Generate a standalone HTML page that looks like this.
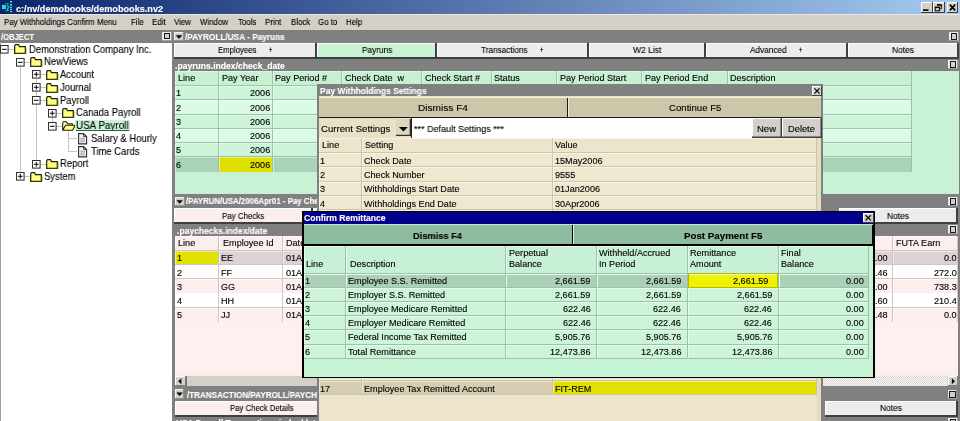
<!DOCTYPE html><html><head><meta charset="utf-8"><style>
*{margin:0;padding:0;box-sizing:border-box}
html,body{width:960px;height:421px;overflow:hidden;background:#fff;font-family:"Liberation Sans",sans-serif}
.a{position:absolute}
.t{white-space:nowrap;will-change:transform;-webkit-text-stroke:0.12px currentColor}
</style></head><body><div class="a" style="left:0px;top:0px;width:960px;height:13.5px;background:linear-gradient(to right,#0a246a 0%,#a6caf0 100%);"></div>
<svg class="a" style="left:0px;top:0px" width="14" height="14"><rect x="2" y="4.8" width="4" height="4.3" fill="#18e0d8"/><path d="M10 1h2v1.5h-2zM10 4h2v1.5h-2zM10 6.5h2v1.3h-2zM10 8.7h2v1.3h-2zM10 11h2v1.2h-2z" fill="#50e8e0"/><path d="M5.5 3.3h3v1h-3zM7 5h1.5v1.5h-1.5zM7.5 6.5h2v1.2h-2zM7 8h1.5v2h-1.5zM5.5 10.2h3v1h-3z" fill="#30c8b8"/></svg>
<div class="a t" style="left:15.50px;top:5.00px;font-size:9.15px;line-height:9.15px;color:#fff;font-weight:bold;">c:/nv/demobooks/demobooks.nv2</div>
<div class="a" style="left:921px;top:1.5px;width:11.5px;height:11px;background:#d4d0c8;box-shadow:inset -1px -1px #404040, inset 1px 1px #fff;"></div>
<div class="a" style="left:933px;top:1.5px;width:11.5px;height:11px;background:#d4d0c8;box-shadow:inset -1px -1px #404040, inset 1px 1px #fff;"></div>
<div class="a" style="left:946.5px;top:1.5px;width:11.5px;height:11px;background:#d4d0c8;box-shadow:inset -1px -1px #404040, inset 1px 1px #fff;"></div>
<svg class="a" style="left:921px;top:1.5px" width="12" height="11"><rect x="2" y="7.3" width="5.5" height="1.6" fill="#000"/></svg>
<svg class="a" style="left:933px;top:1.5px" width="12" height="11"><path d="M4 2.9h4.3v3.8h-1" fill="none" stroke="#000" stroke-width="1"/><rect x="4" y="2.4" width="4.8" height="1.2" fill="#000"/><rect x="2.2" y="5.2" width="4.4" height="3.6" fill="none" stroke="#000" stroke-width="1"/><rect x="2.2" y="4.8" width="4.4" height="1.3" fill="#000"/></svg>
<svg class="a" style="left:946.5px;top:1.5px" width="12" height="11"><path d="M2.8 2.6L8.2 8.4M8.2 2.6L2.8 8.4" stroke="#000" stroke-width="1.6"/></svg>
<div class="a" style="left:0px;top:13.5px;width:960px;height:1px;background:#ece9e2;"></div>
<div class="a" style="left:0px;top:14.5px;width:960px;height:15.5px;background:#d4d0c8;"></div>
<div class="a t" style="left:3.80px;top:18.00px;font-size:9.2px;line-height:9.2px;color:#000;transform:scaleX(0.8587);transform-origin:0 0;">Pay Withholdings Confirm Menu</div>
<div class="a t" style="left:130.80px;top:18.00px;font-size:9.2px;line-height:9.2px;color:#000;transform:scaleX(0.8587);transform-origin:0 0;">File</div>
<div class="a t" style="left:151.60px;top:18.00px;font-size:9.2px;line-height:9.2px;color:#000;transform:scaleX(0.8587);transform-origin:0 0;">Edit</div>
<div class="a t" style="left:174.00px;top:18.00px;font-size:9.2px;line-height:9.2px;color:#000;transform:scaleX(0.8587);transform-origin:0 0;">View</div>
<div class="a t" style="left:200.00px;top:18.00px;font-size:9.2px;line-height:9.2px;color:#000;transform:scaleX(0.8587);transform-origin:0 0;">Window</div>
<div class="a t" style="left:237.50px;top:18.00px;font-size:9.2px;line-height:9.2px;color:#000;transform:scaleX(0.8587);transform-origin:0 0;">Tools</div>
<div class="a t" style="left:264.50px;top:18.00px;font-size:9.2px;line-height:9.2px;color:#000;transform:scaleX(0.8587);transform-origin:0 0;">Print</div>
<div class="a t" style="left:290.50px;top:18.00px;font-size:9.2px;line-height:9.2px;color:#000;transform:scaleX(0.8587);transform-origin:0 0;">Block</div>
<div class="a t" style="left:317.50px;top:18.00px;font-size:9.2px;line-height:9.2px;color:#000;transform:scaleX(0.8587);transform-origin:0 0;">Go to</div>
<div class="a t" style="left:345.50px;top:18.00px;font-size:9.2px;line-height:9.2px;color:#000;transform:scaleX(0.8587);transform-origin:0 0;">Help</div>
<div class="a" style="left:0px;top:30px;width:172px;height:12.6px;background:#808080;"></div>
<div class="a t" style="left:1.00px;top:33.00px;font-size:8.3px;line-height:8.3px;color:#fff;font-weight:bold;transform:scaleX(0.9174);transform-origin:0 0;">/OBJECT</div>
<div class="a" style="left:162px;top:31.6px;width:10px;height:9.3px;background:#ececec;box-shadow:inset -1px -1px #a0a0a0;"></div>
<div class="a" style="left:163.5px;top:33.1px;width:6.8px;height:6.300000000000001px;border:1.2px solid #181818;border-top-width:1.6px;background:#d0d0d0;"></div>
<div class="a" style="left:0px;top:42.6px;width:172px;height:379px;background:#fff;"></div>
<div class="a" style="left:172px;top:30px;width:3px;height:391px;background:#808080;"></div>
<div class="a" style="left:172.9px;top:42px;width:1px;height:379px;background:#505050;"></div>
<div class="a" style="left:0px;top:42px;width:1px;height:379px;background:#a0a0a0;"></div>
<div class="a" style="left:20px;top:65.75px;width:1px;height:110.75px;background:#c4c4c4"></div>
<div class="a" style="left:36px;top:78.5px;width:1px;height:85.25px;background:#c4c4c4"></div>
<div class="a" style="left:52px;top:116.75px;width:1px;height:4.75px;background:#c4c4c4"></div>
<div class="a" style="left:68px;top:130.5px;width:1px;height:21.0px;background:#c4c4c4"></div>
<div class="a" style="left:8.5px;top:49px;width:6.0px;height:1px;background:#c4c4c4"></div>
<svg class="a" style="left:0px;top:45px" width="9" height="9"><rect x="0.5" y="0.5" width="7.6" height="7.6" fill="#fff" stroke="#303030" stroke-width="1.05"/><path d="M2 4.3H6.6" stroke="#000" stroke-width="1"/></svg>
<svg class="a" style="left:14px;top:44px" width="13" height="10"><path d="M0.7 1.7 L0.7 9.3 L11.3 9.3 L11.3 2.7 L5.5 2.7 L4.5 0.7 L1.5 0.7 Z" fill="#ffff80" stroke="#202000" stroke-width="1.2"/><path d="M11.9 3.5 V9.9 H1.5" stroke="#606000" stroke-width="0.8" fill="none"/></svg>
<div class="a t" style="left:28.50px;top:45.00px;font-size:10.3px;line-height:10.3px;color:#000;transform:scaleX(0.9182);transform-origin:0 0;">Demonstration Company Inc.</div>
<div class="a" style="left:24.3px;top:62px;width:6.0px;height:1px;background:#c4c4c4"></div>
<svg class="a" style="left:16px;top:58px" width="9" height="9"><rect x="0.5" y="0.5" width="7.6" height="7.6" fill="#fff" stroke="#303030" stroke-width="1.05"/><path d="M2 4.3H6.6" stroke="#000" stroke-width="1"/></svg>
<svg class="a" style="left:30px;top:57px" width="13" height="10"><path d="M0.7 1.7 L0.7 9.3 L11.3 9.3 L11.3 2.7 L5.5 2.7 L4.5 0.7 L1.5 0.7 Z" fill="#ffff80" stroke="#202000" stroke-width="1.2"/><path d="M11.9 3.5 V9.9 H1.5" stroke="#606000" stroke-width="0.8" fill="none"/></svg>
<div class="a t" style="left:44.30px;top:57.00px;font-size:10.3px;line-height:10.3px;color:#000;transform:scaleX(0.9182);transform-origin:0 0;">NewViews</div>
<div class="a" style="left:40.1px;top:74px;width:6.0px;height:1px;background:#c4c4c4"></div>
<svg class="a" style="left:32px;top:70px" width="9" height="9"><rect x="0.5" y="0.5" width="7.6" height="7.6" fill="#fff" stroke="#303030" stroke-width="1.05"/><path d="M2 4.3H6.6 M4.3 2V6.6" stroke="#000" stroke-width="1"/></svg>
<svg class="a" style="left:46px;top:70px" width="13" height="10"><path d="M0.7 1.7 L0.7 9.3 L11.3 9.3 L11.3 2.7 L5.5 2.7 L4.5 0.7 L1.5 0.7 Z" fill="#ffff80" stroke="#202000" stroke-width="1.2"/><path d="M11.9 3.5 V9.9 H1.5" stroke="#606000" stroke-width="0.8" fill="none"/></svg>
<div class="a t" style="left:60.10px;top:70.00px;font-size:10.3px;line-height:10.3px;color:#000;transform:scaleX(0.9182);transform-origin:0 0;">Account</div>
<div class="a" style="left:40.1px;top:87px;width:6.0px;height:1px;background:#c4c4c4"></div>
<svg class="a" style="left:32px;top:83px" width="9" height="9"><rect x="0.5" y="0.5" width="7.6" height="7.6" fill="#fff" stroke="#303030" stroke-width="1.05"/><path d="M2 4.3H6.6 M4.3 2V6.6" stroke="#000" stroke-width="1"/></svg>
<svg class="a" style="left:46px;top:83px" width="13" height="10"><path d="M0.7 1.7 L0.7 9.3 L11.3 9.3 L11.3 2.7 L5.5 2.7 L4.5 0.7 L1.5 0.7 Z" fill="#ffff80" stroke="#202000" stroke-width="1.2"/><path d="M11.9 3.5 V9.9 H1.5" stroke="#606000" stroke-width="0.8" fill="none"/></svg>
<div class="a t" style="left:60.10px;top:83.00px;font-size:10.3px;line-height:10.3px;color:#000;transform:scaleX(0.9182);transform-origin:0 0;">Journal</div>
<div class="a" style="left:40.1px;top:100px;width:6.0px;height:1px;background:#c4c4c4"></div>
<svg class="a" style="left:32px;top:96px" width="9" height="9"><rect x="0.5" y="0.5" width="7.6" height="7.6" fill="#fff" stroke="#303030" stroke-width="1.05"/><path d="M2 4.3H6.6" stroke="#000" stroke-width="1"/></svg>
<svg class="a" style="left:46px;top:96px" width="13" height="10"><path d="M0.7 1.7 L0.7 9.3 L11.3 9.3 L11.3 2.7 L5.5 2.7 L4.5 0.7 L1.5 0.7 Z" fill="#ffff80" stroke="#202000" stroke-width="1.2"/><path d="M11.9 3.5 V9.9 H1.5" stroke="#606000" stroke-width="0.8" fill="none"/></svg>
<div class="a t" style="left:60.10px;top:96.00px;font-size:10.3px;line-height:10.3px;color:#000;transform:scaleX(0.9182);transform-origin:0 0;">Payroll</div>
<div class="a" style="left:55.900000000000006px;top:113px;width:6.0px;height:1px;background:#c4c4c4"></div>
<svg class="a" style="left:48px;top:109px" width="9" height="9"><rect x="0.5" y="0.5" width="7.6" height="7.6" fill="#fff" stroke="#303030" stroke-width="1.05"/><path d="M2 4.3H6.6 M4.3 2V6.6" stroke="#000" stroke-width="1"/></svg>
<svg class="a" style="left:62px;top:108px" width="13" height="10"><path d="M0.7 1.7 L0.7 9.3 L11.3 9.3 L11.3 2.7 L5.5 2.7 L4.5 0.7 L1.5 0.7 Z" fill="#ffff80" stroke="#202000" stroke-width="1.2"/><path d="M11.9 3.5 V9.9 H1.5" stroke="#606000" stroke-width="0.8" fill="none"/></svg>
<div class="a t" style="left:75.90px;top:108.00px;font-size:10.3px;line-height:10.3px;color:#000;transform:scaleX(0.9182);transform-origin:0 0;">Canada Payroll</div>
<div class="a" style="left:55.900000000000006px;top:126px;width:6.0px;height:1px;background:#c4c4c4"></div>
<svg class="a" style="left:48px;top:122px" width="9" height="9"><rect x="0.5" y="0.5" width="7.6" height="7.6" fill="#fff" stroke="#303030" stroke-width="1.05"/><path d="M2 4.3H6.6" stroke="#000" stroke-width="1"/></svg>
<svg class="a" style="left:62px;top:121px" width="14" height="10"><path d="M0.7 1.7 L0.7 9.3 L10.5 9.3 L13.3 4.3 L3.5 4.3 L0.7 9.3 M0.7 1.7 L1.5 0.7 L4.5 0.7 L5.5 2.7 L10.3 2.7 L10.3 4.3" fill="#ffff80" stroke="#202000" stroke-width="1.1"/></svg>
<div class="a" style="left:75.4px;top:119.7px;width:54.5px;height:11px;background:#c8f4d4;"></div>
<div class="a t" style="left:75.90px;top:121.00px;font-size:10.3px;line-height:10.3px;color:#000;transform:scaleX(0.9553);transform-origin:0 0;">USA Payroll</div>
<div class="a" style="left:75.9px;top:129.8px;width:52.8px;height:1px;background:#3a5a48;"></div>
<div class="a" style="left:68px;top:138px;width:9px;height:1px;background:#c4c4c4"></div>
<svg class="a" style="left:78.3px;top:133px" width="10" height="12"><path d="M0.6 0.6 H5.6 L8.6 3.6 V10.9 H0.6 Z" fill="#f4f4f4" stroke="#303030" stroke-width="1.1"/><path d="M5.6 0.6 V3.6 H8.6" fill="none" stroke="#303030" stroke-width="0.9"/><path d="M2.2 5.3H7M2.2 7H7M2.2 8.7H7" stroke="#909090" stroke-width="0.8"/></svg>
<div class="a t" style="left:91.30px;top:134.00px;font-size:10.3px;line-height:10.3px;color:#000;transform:scaleX(0.9182);transform-origin:0 0;">Salary &amp; Hourly</div>
<div class="a" style="left:68px;top:151px;width:9px;height:1px;background:#c4c4c4"></div>
<svg class="a" style="left:78.3px;top:146px" width="10" height="12"><path d="M0.6 0.6 H5.6 L8.6 3.6 V10.9 H0.6 Z" fill="#f4f4f4" stroke="#303030" stroke-width="1.1"/><path d="M5.6 0.6 V3.6 H8.6" fill="none" stroke="#303030" stroke-width="0.9"/><path d="M2.2 5.3H7M2.2 7H7M2.2 8.7H7" stroke="#909090" stroke-width="0.8"/></svg>
<div class="a t" style="left:91.30px;top:147.00px;font-size:10.3px;line-height:10.3px;color:#000;transform:scaleX(0.9182);transform-origin:0 0;">Time Cards</div>
<div class="a" style="left:40.1px;top:164px;width:6.0px;height:1px;background:#c4c4c4"></div>
<svg class="a" style="left:32px;top:160px" width="9" height="9"><rect x="0.5" y="0.5" width="7.6" height="7.6" fill="#fff" stroke="#303030" stroke-width="1.05"/><path d="M2 4.3H6.6 M4.3 2V6.6" stroke="#000" stroke-width="1"/></svg>
<svg class="a" style="left:46px;top:159px" width="13" height="10"><path d="M0.7 1.7 L0.7 9.3 L11.3 9.3 L11.3 2.7 L5.5 2.7 L4.5 0.7 L1.5 0.7 Z" fill="#ffff80" stroke="#202000" stroke-width="1.2"/><path d="M11.9 3.5 V9.9 H1.5" stroke="#606000" stroke-width="0.8" fill="none"/></svg>
<div class="a t" style="left:60.10px;top:159.00px;font-size:10.3px;line-height:10.3px;color:#000;transform:scaleX(0.9182);transform-origin:0 0;">Report</div>
<div class="a" style="left:24.3px;top:176px;width:6.0px;height:1px;background:#c4c4c4"></div>
<svg class="a" style="left:16px;top:172px" width="9" height="9"><rect x="0.5" y="0.5" width="7.6" height="7.6" fill="#fff" stroke="#303030" stroke-width="1.05"/><path d="M2 4.3H6.6 M4.3 2V6.6" stroke="#000" stroke-width="1"/></svg>
<svg class="a" style="left:30px;top:172px" width="13" height="10"><path d="M0.7 1.7 L0.7 9.3 L11.3 9.3 L11.3 2.7 L5.5 2.7 L4.5 0.7 L1.5 0.7 Z" fill="#ffff80" stroke="#202000" stroke-width="1.2"/><path d="M11.9 3.5 V9.9 H1.5" stroke="#606000" stroke-width="0.8" fill="none"/></svg>
<div class="a t" style="left:44.30px;top:172.00px;font-size:10.3px;line-height:10.3px;color:#000;transform:scaleX(0.9182);transform-origin:0 0;">System</div>
<div class="a" style="left:172px;top:30px;width:788px;height:391px;background:#808080;"></div>
<div class="a" style="left:174px;top:31.5px;width:10px;height:9.5px;background:#d4d0c8;box-shadow:inset -1px -1px #909090, inset 1px 1px #f4f4f4;"></div>
<svg class="a" style="left:174px;top:31.5px" width="10" height="9.5"><path d="M2.3 3.55 L7.7 3.55 L5.0 6.55 Z" fill="#000" stroke="#000" stroke-width="0.5"/></svg>
<div class="a t" style="left:185.30px;top:33.00px;font-size:8.3px;line-height:8.3px;color:#fff;font-weight:bold;transform:scaleX(0.9946);transform-origin:0 0;">/PAYROLL/USA - Payruns</div>
<div class="a" style="left:949px;top:31.8px;width:9.5px;height:9.5px;background:#ececec;box-shadow:inset -1px -1px #a0a0a0;"></div>
<div class="a" style="left:950.5px;top:33.3px;width:6.3px;height:6.5px;border:1.2px solid #181818;border-top-width:1.6px;background:#d0d0d0;"></div>
<div class="a" style="left:174px;top:42.6px;width:143px;height:16.4px;background:#ececec;box-shadow:inset -2px -2px #404040, inset 1px 1px #fff;"></div>
<div class="a t" style="left:217.80px;top:46.00px;font-size:9px;line-height:9px;color:#000;transform:scaleX(0.8625);transform-origin:0 0;">Employees</div>
<div class="a t" style="left:268.70px;top:46.00px;font-size:9px;line-height:9px;color:#000;transform:scaleX(0.6469);transform-origin:0 0;">+</div>
<div class="a" style="left:317px;top:42.6px;width:120px;height:16.4px;background:#c8f4d4;box-shadow:inset -2px -2px #404040, inset 1px 1px #fff;"></div>
<div class="a t" style="left:361.85px;top:46.00px;font-size:9px;line-height:9px;color:#000;transform:scaleX(0.9177);transform-origin:0 0;">Payruns</div>
<div class="a" style="left:437px;top:42.6px;width:152px;height:16.4px;background:#ececec;box-shadow:inset -2px -2px #404040, inset 1px 1px #fff;"></div>
<div class="a t" style="left:481.25px;top:46.00px;font-size:9px;line-height:9px;color:#000;transform:scaleX(0.9084);transform-origin:0 0;">Transactions</div>
<div class="a t" style="left:540.25px;top:46.00px;font-size:9px;line-height:9px;color:#000;transform:scaleX(0.6469);transform-origin:0 0;">+</div>
<div class="a" style="left:589px;top:42.6px;width:117px;height:16.4px;background:#ececec;box-shadow:inset -2px -2px #404040, inset 1px 1px #fff;"></div>
<div class="a t" style="left:633.30px;top:46.00px;font-size:9px;line-height:9px;color:#000;transform:scaleX(0.9465);transform-origin:0 0;">W2 List</div>
<div class="a" style="left:706px;top:42.6px;width:142px;height:16.4px;background:#ececec;box-shadow:inset -2px -2px #404040, inset 1px 1px #fff;"></div>
<div class="a t" style="left:750.20px;top:46.00px;font-size:9px;line-height:9px;color:#000;transform:scaleX(0.9143);transform-origin:0 0;">Advanced</div>
<div class="a t" style="left:799.30px;top:46.00px;font-size:9px;line-height:9px;color:#000;transform:scaleX(0.6469);transform-origin:0 0;">+</div>
<div class="a" style="left:848px;top:42.6px;width:110.5px;height:16.4px;background:#ececec;box-shadow:inset -2px -2px #404040, inset 1px 1px #fff;"></div>
<div class="a t" style="left:892.25px;top:46.00px;font-size:9px;line-height:9px;color:#000;transform:scaleX(0.9357);transform-origin:0 0;">Notes</div>
<div class="a t" style="left:175.30px;top:62.00px;font-size:8.6px;line-height:8.6px;color:#fff;font-weight:bold;">.payruns.index/check_date</div>
<div class="a" style="left:948px;top:59.6px;width:9.7px;height:9.5px;background:#ececec;box-shadow:inset -1px -1px #a0a0a0;"></div>
<div class="a" style="left:949.5px;top:61.1px;width:6.499999999999999px;height:6.5px;border:1.2px solid #181818;border-top-width:1.6px;background:#d0d0d0;"></div>
<div class="a" style="left:174.5px;top:71px;width:784px;height:122.6px;background:#c8f2d4;"></div>
<div class="a" style="left:175px;top:71px;width:44px;height:15px;background:#c6f0d2;border-right:1.4px solid #9cc4aa;border-bottom:1.2px solid #9cc4aa;box-shadow:inset 1px 1px rgba(255,255,255,0.45);"></div>
<div class="a" style="left:219px;top:71px;width:53.5px;height:15px;background:#c6f0d2;border-right:1.4px solid #9cc4aa;border-bottom:1.2px solid #9cc4aa;box-shadow:inset 1px 1px rgba(255,255,255,0.45);"></div>
<div class="a" style="left:272.5px;top:71px;width:69.5px;height:15px;background:#c6f0d2;border-right:1.4px solid #9cc4aa;border-bottom:1.2px solid #9cc4aa;box-shadow:inset 1px 1px rgba(255,255,255,0.45);"></div>
<div class="a" style="left:342px;top:71px;width:80px;height:15px;background:#c6f0d2;border-right:1.4px solid #9cc4aa;border-bottom:1.2px solid #9cc4aa;box-shadow:inset 1px 1px rgba(255,255,255,0.45);"></div>
<div class="a" style="left:422px;top:71px;width:69.5px;height:15px;background:#c6f0d2;border-right:1.4px solid #9cc4aa;border-bottom:1.2px solid #9cc4aa;box-shadow:inset 1px 1px rgba(255,255,255,0.45);"></div>
<div class="a" style="left:491.5px;top:71px;width:65.5px;height:15px;background:#c6f0d2;border-right:1.4px solid #9cc4aa;border-bottom:1.2px solid #9cc4aa;box-shadow:inset 1px 1px rgba(255,255,255,0.45);"></div>
<div class="a" style="left:557px;top:71px;width:85px;height:15px;background:#c6f0d2;border-right:1.4px solid #9cc4aa;border-bottom:1.2px solid #9cc4aa;box-shadow:inset 1px 1px rgba(255,255,255,0.45);"></div>
<div class="a" style="left:642px;top:71px;width:85.5px;height:15px;background:#c6f0d2;border-right:1.4px solid #9cc4aa;border-bottom:1.2px solid #9cc4aa;box-shadow:inset 1px 1px rgba(255,255,255,0.45);"></div>
<div class="a" style="left:727.5px;top:71px;width:184.5px;height:15px;background:#c6f0d2;border-right:1.4px solid #9cc4aa;border-bottom:1.2px solid #9cc4aa;box-shadow:inset 1px 1px rgba(255,255,255,0.45);"></div>
<div class="a t" style="left:177.70px;top:74.00px;font-size:9.1px;line-height:9.1px;color:#000;">Line</div>
<div class="a t" style="left:221.70px;top:74.00px;font-size:9.1px;line-height:9.1px;color:#000;">Pay Year</div>
<div class="a t" style="left:275.20px;top:74.00px;font-size:9.1px;line-height:9.1px;color:#000;">Pay Period #</div>
<div class="a t" style="left:344.70px;top:74.00px;font-size:9.1px;line-height:9.1px;color:#000;">Check Date&nbsp;&nbsp;w</div>
<div class="a t" style="left:424.70px;top:74.00px;font-size:9.1px;line-height:9.1px;color:#000;">Check Start #</div>
<div class="a t" style="left:494.20px;top:74.00px;font-size:9.1px;line-height:9.1px;color:#000;">Status</div>
<div class="a t" style="left:559.70px;top:74.00px;font-size:9.1px;line-height:9.1px;color:#000;">Pay Period Start</div>
<div class="a t" style="left:644.70px;top:74.00px;font-size:9.1px;line-height:9.1px;color:#000;">Pay Period End</div>
<div class="a t" style="left:730.20px;top:74.00px;font-size:9.1px;line-height:9.1px;color:#000;">Description</div>
<div class="a" style="left:175px;top:86.0px;width:44px;height:14.25px;background:#cdf3d9;border-right:1.4px solid #9cc4aa;border-bottom:1.2px solid #9cc4aa;box-shadow:inset 1px 1px rgba(255,255,255,0.45);"></div>
<div class="a" style="left:219px;top:86.0px;width:53.5px;height:14.25px;background:#cdf3d9;border-right:1.4px solid #9cc4aa;border-bottom:1.2px solid #9cc4aa;box-shadow:inset 1px 1px rgba(255,255,255,0.45);"></div>
<div class="a" style="left:272.5px;top:86.0px;width:69.5px;height:14.25px;background:#cdf3d9;border-right:1.4px solid #9cc4aa;border-bottom:1.2px solid #9cc4aa;box-shadow:inset 1px 1px rgba(255,255,255,0.45);"></div>
<div class="a" style="left:342px;top:86.0px;width:80px;height:14.25px;background:#cdf3d9;border-right:1.4px solid #9cc4aa;border-bottom:1.2px solid #9cc4aa;box-shadow:inset 1px 1px rgba(255,255,255,0.45);"></div>
<div class="a" style="left:422px;top:86.0px;width:69.5px;height:14.25px;background:#cdf3d9;border-right:1.4px solid #9cc4aa;border-bottom:1.2px solid #9cc4aa;box-shadow:inset 1px 1px rgba(255,255,255,0.45);"></div>
<div class="a" style="left:491.5px;top:86.0px;width:65.5px;height:14.25px;background:#cdf3d9;border-right:1.4px solid #9cc4aa;border-bottom:1.2px solid #9cc4aa;box-shadow:inset 1px 1px rgba(255,255,255,0.45);"></div>
<div class="a" style="left:557px;top:86.0px;width:85px;height:14.25px;background:#cdf3d9;border-right:1.4px solid #9cc4aa;border-bottom:1.2px solid #9cc4aa;box-shadow:inset 1px 1px rgba(255,255,255,0.45);"></div>
<div class="a" style="left:642px;top:86.0px;width:85.5px;height:14.25px;background:#cdf3d9;border-right:1.4px solid #9cc4aa;border-bottom:1.2px solid #9cc4aa;box-shadow:inset 1px 1px rgba(255,255,255,0.45);"></div>
<div class="a" style="left:727.5px;top:86.0px;width:184.5px;height:14.25px;background:#cdf3d9;border-right:1.4px solid #9cc4aa;border-bottom:1.2px solid #9cc4aa;box-shadow:inset 1px 1px rgba(255,255,255,0.45);"></div>
<div class="a t" style="left:176.00px;top:89.00px;font-size:9.1px;line-height:9.1px;color:#000;">1</div>
<div class="a t" style="left:250.26px;top:89.00px;font-size:9.1px;line-height:9.1px;color:#000;">2006</div>
<div class="a" style="left:175px;top:100.25px;width:44px;height:14.25px;background:#dcfbe6;border-right:1.4px solid #9cc4aa;border-bottom:1.2px solid #9cc4aa;box-shadow:inset 1px 1px rgba(255,255,255,0.45);"></div>
<div class="a" style="left:219px;top:100.25px;width:53.5px;height:14.25px;background:#dcfbe6;border-right:1.4px solid #9cc4aa;border-bottom:1.2px solid #9cc4aa;box-shadow:inset 1px 1px rgba(255,255,255,0.45);"></div>
<div class="a" style="left:272.5px;top:100.25px;width:69.5px;height:14.25px;background:#dcfbe6;border-right:1.4px solid #9cc4aa;border-bottom:1.2px solid #9cc4aa;box-shadow:inset 1px 1px rgba(255,255,255,0.45);"></div>
<div class="a" style="left:342px;top:100.25px;width:80px;height:14.25px;background:#dcfbe6;border-right:1.4px solid #9cc4aa;border-bottom:1.2px solid #9cc4aa;box-shadow:inset 1px 1px rgba(255,255,255,0.45);"></div>
<div class="a" style="left:422px;top:100.25px;width:69.5px;height:14.25px;background:#dcfbe6;border-right:1.4px solid #9cc4aa;border-bottom:1.2px solid #9cc4aa;box-shadow:inset 1px 1px rgba(255,255,255,0.45);"></div>
<div class="a" style="left:491.5px;top:100.25px;width:65.5px;height:14.25px;background:#dcfbe6;border-right:1.4px solid #9cc4aa;border-bottom:1.2px solid #9cc4aa;box-shadow:inset 1px 1px rgba(255,255,255,0.45);"></div>
<div class="a" style="left:557px;top:100.25px;width:85px;height:14.25px;background:#dcfbe6;border-right:1.4px solid #9cc4aa;border-bottom:1.2px solid #9cc4aa;box-shadow:inset 1px 1px rgba(255,255,255,0.45);"></div>
<div class="a" style="left:642px;top:100.25px;width:85.5px;height:14.25px;background:#dcfbe6;border-right:1.4px solid #9cc4aa;border-bottom:1.2px solid #9cc4aa;box-shadow:inset 1px 1px rgba(255,255,255,0.45);"></div>
<div class="a" style="left:727.5px;top:100.25px;width:184.5px;height:14.25px;background:#dcfbe6;border-right:1.4px solid #9cc4aa;border-bottom:1.2px solid #9cc4aa;box-shadow:inset 1px 1px rgba(255,255,255,0.45);"></div>
<div class="a t" style="left:176.00px;top:104.00px;font-size:9.1px;line-height:9.1px;color:#000;">2</div>
<div class="a t" style="left:250.26px;top:104.00px;font-size:9.1px;line-height:9.1px;color:#000;">2006</div>
<div class="a" style="left:175px;top:114.5px;width:44px;height:14.25px;background:#cdf3d9;border-right:1.4px solid #9cc4aa;border-bottom:1.2px solid #9cc4aa;box-shadow:inset 1px 1px rgba(255,255,255,0.45);"></div>
<div class="a" style="left:219px;top:114.5px;width:53.5px;height:14.25px;background:#cdf3d9;border-right:1.4px solid #9cc4aa;border-bottom:1.2px solid #9cc4aa;box-shadow:inset 1px 1px rgba(255,255,255,0.45);"></div>
<div class="a" style="left:272.5px;top:114.5px;width:69.5px;height:14.25px;background:#cdf3d9;border-right:1.4px solid #9cc4aa;border-bottom:1.2px solid #9cc4aa;box-shadow:inset 1px 1px rgba(255,255,255,0.45);"></div>
<div class="a" style="left:342px;top:114.5px;width:80px;height:14.25px;background:#cdf3d9;border-right:1.4px solid #9cc4aa;border-bottom:1.2px solid #9cc4aa;box-shadow:inset 1px 1px rgba(255,255,255,0.45);"></div>
<div class="a" style="left:422px;top:114.5px;width:69.5px;height:14.25px;background:#cdf3d9;border-right:1.4px solid #9cc4aa;border-bottom:1.2px solid #9cc4aa;box-shadow:inset 1px 1px rgba(255,255,255,0.45);"></div>
<div class="a" style="left:491.5px;top:114.5px;width:65.5px;height:14.25px;background:#cdf3d9;border-right:1.4px solid #9cc4aa;border-bottom:1.2px solid #9cc4aa;box-shadow:inset 1px 1px rgba(255,255,255,0.45);"></div>
<div class="a" style="left:557px;top:114.5px;width:85px;height:14.25px;background:#cdf3d9;border-right:1.4px solid #9cc4aa;border-bottom:1.2px solid #9cc4aa;box-shadow:inset 1px 1px rgba(255,255,255,0.45);"></div>
<div class="a" style="left:642px;top:114.5px;width:85.5px;height:14.25px;background:#cdf3d9;border-right:1.4px solid #9cc4aa;border-bottom:1.2px solid #9cc4aa;box-shadow:inset 1px 1px rgba(255,255,255,0.45);"></div>
<div class="a" style="left:727.5px;top:114.5px;width:184.5px;height:14.25px;background:#cdf3d9;border-right:1.4px solid #9cc4aa;border-bottom:1.2px solid #9cc4aa;box-shadow:inset 1px 1px rgba(255,255,255,0.45);"></div>
<div class="a t" style="left:176.00px;top:118.00px;font-size:9.1px;line-height:9.1px;color:#000;">3</div>
<div class="a t" style="left:250.26px;top:118.00px;font-size:9.1px;line-height:9.1px;color:#000;">2006</div>
<div class="a" style="left:175px;top:128.75px;width:44px;height:14.25px;background:#dcfbe6;border-right:1.4px solid #9cc4aa;border-bottom:1.2px solid #9cc4aa;box-shadow:inset 1px 1px rgba(255,255,255,0.45);"></div>
<div class="a" style="left:219px;top:128.75px;width:53.5px;height:14.25px;background:#dcfbe6;border-right:1.4px solid #9cc4aa;border-bottom:1.2px solid #9cc4aa;box-shadow:inset 1px 1px rgba(255,255,255,0.45);"></div>
<div class="a" style="left:272.5px;top:128.75px;width:69.5px;height:14.25px;background:#dcfbe6;border-right:1.4px solid #9cc4aa;border-bottom:1.2px solid #9cc4aa;box-shadow:inset 1px 1px rgba(255,255,255,0.45);"></div>
<div class="a" style="left:342px;top:128.75px;width:80px;height:14.25px;background:#dcfbe6;border-right:1.4px solid #9cc4aa;border-bottom:1.2px solid #9cc4aa;box-shadow:inset 1px 1px rgba(255,255,255,0.45);"></div>
<div class="a" style="left:422px;top:128.75px;width:69.5px;height:14.25px;background:#dcfbe6;border-right:1.4px solid #9cc4aa;border-bottom:1.2px solid #9cc4aa;box-shadow:inset 1px 1px rgba(255,255,255,0.45);"></div>
<div class="a" style="left:491.5px;top:128.75px;width:65.5px;height:14.25px;background:#dcfbe6;border-right:1.4px solid #9cc4aa;border-bottom:1.2px solid #9cc4aa;box-shadow:inset 1px 1px rgba(255,255,255,0.45);"></div>
<div class="a" style="left:557px;top:128.75px;width:85px;height:14.25px;background:#dcfbe6;border-right:1.4px solid #9cc4aa;border-bottom:1.2px solid #9cc4aa;box-shadow:inset 1px 1px rgba(255,255,255,0.45);"></div>
<div class="a" style="left:642px;top:128.75px;width:85.5px;height:14.25px;background:#dcfbe6;border-right:1.4px solid #9cc4aa;border-bottom:1.2px solid #9cc4aa;box-shadow:inset 1px 1px rgba(255,255,255,0.45);"></div>
<div class="a" style="left:727.5px;top:128.75px;width:184.5px;height:14.25px;background:#dcfbe6;border-right:1.4px solid #9cc4aa;border-bottom:1.2px solid #9cc4aa;box-shadow:inset 1px 1px rgba(255,255,255,0.45);"></div>
<div class="a t" style="left:176.00px;top:132.00px;font-size:9.1px;line-height:9.1px;color:#000;">4</div>
<div class="a t" style="left:250.26px;top:132.00px;font-size:9.1px;line-height:9.1px;color:#000;">2006</div>
<div class="a" style="left:175px;top:143.0px;width:44px;height:14.25px;background:#cdf3d9;border-right:1.4px solid #9cc4aa;border-bottom:1.2px solid #9cc4aa;box-shadow:inset 1px 1px rgba(255,255,255,0.45);"></div>
<div class="a" style="left:219px;top:143.0px;width:53.5px;height:14.25px;background:#cdf3d9;border-right:1.4px solid #9cc4aa;border-bottom:1.2px solid #9cc4aa;box-shadow:inset 1px 1px rgba(255,255,255,0.45);"></div>
<div class="a" style="left:272.5px;top:143.0px;width:69.5px;height:14.25px;background:#cdf3d9;border-right:1.4px solid #9cc4aa;border-bottom:1.2px solid #9cc4aa;box-shadow:inset 1px 1px rgba(255,255,255,0.45);"></div>
<div class="a" style="left:342px;top:143.0px;width:80px;height:14.25px;background:#cdf3d9;border-right:1.4px solid #9cc4aa;border-bottom:1.2px solid #9cc4aa;box-shadow:inset 1px 1px rgba(255,255,255,0.45);"></div>
<div class="a" style="left:422px;top:143.0px;width:69.5px;height:14.25px;background:#cdf3d9;border-right:1.4px solid #9cc4aa;border-bottom:1.2px solid #9cc4aa;box-shadow:inset 1px 1px rgba(255,255,255,0.45);"></div>
<div class="a" style="left:491.5px;top:143.0px;width:65.5px;height:14.25px;background:#cdf3d9;border-right:1.4px solid #9cc4aa;border-bottom:1.2px solid #9cc4aa;box-shadow:inset 1px 1px rgba(255,255,255,0.45);"></div>
<div class="a" style="left:557px;top:143.0px;width:85px;height:14.25px;background:#cdf3d9;border-right:1.4px solid #9cc4aa;border-bottom:1.2px solid #9cc4aa;box-shadow:inset 1px 1px rgba(255,255,255,0.45);"></div>
<div class="a" style="left:642px;top:143.0px;width:85.5px;height:14.25px;background:#cdf3d9;border-right:1.4px solid #9cc4aa;border-bottom:1.2px solid #9cc4aa;box-shadow:inset 1px 1px rgba(255,255,255,0.45);"></div>
<div class="a" style="left:727.5px;top:143.0px;width:184.5px;height:14.25px;background:#cdf3d9;border-right:1.4px solid #9cc4aa;border-bottom:1.2px solid #9cc4aa;box-shadow:inset 1px 1px rgba(255,255,255,0.45);"></div>
<div class="a t" style="left:176.00px;top:146.00px;font-size:9.1px;line-height:9.1px;color:#000;">5</div>
<div class="a t" style="left:250.26px;top:146.00px;font-size:9.1px;line-height:9.1px;color:#000;">2006</div>
<div class="a" style="left:175px;top:157.25px;width:44px;height:14.25px;background:#a9d3b9;border-right:1.4px solid #9cc4aa;box-shadow:inset 1px 1px rgba(255,255,255,0.45);"></div>
<div class="a" style="left:219px;top:157.25px;width:53.5px;height:14.25px;background:#e0e000;border-right:1.4px solid #9cc4aa;box-shadow:inset 1px 1px rgba(255,255,255,0.45);"></div>
<div class="a" style="left:272.5px;top:157.25px;width:69.5px;height:14.25px;background:#a9d3b9;border-right:1.4px solid #9cc4aa;box-shadow:inset 1px 1px rgba(255,255,255,0.45);"></div>
<div class="a" style="left:342px;top:157.25px;width:80px;height:14.25px;background:#a9d3b9;border-right:1.4px solid #9cc4aa;box-shadow:inset 1px 1px rgba(255,255,255,0.45);"></div>
<div class="a" style="left:422px;top:157.25px;width:69.5px;height:14.25px;background:#a9d3b9;border-right:1.4px solid #9cc4aa;box-shadow:inset 1px 1px rgba(255,255,255,0.45);"></div>
<div class="a" style="left:491.5px;top:157.25px;width:65.5px;height:14.25px;background:#a9d3b9;border-right:1.4px solid #9cc4aa;box-shadow:inset 1px 1px rgba(255,255,255,0.45);"></div>
<div class="a" style="left:557px;top:157.25px;width:85px;height:14.25px;background:#a9d3b9;border-right:1.4px solid #9cc4aa;box-shadow:inset 1px 1px rgba(255,255,255,0.45);"></div>
<div class="a" style="left:642px;top:157.25px;width:85.5px;height:14.25px;background:#a9d3b9;border-right:1.4px solid #9cc4aa;box-shadow:inset 1px 1px rgba(255,255,255,0.45);"></div>
<div class="a" style="left:727.5px;top:157.25px;width:184.5px;height:14.25px;background:#a9d3b9;border-right:1.4px solid #9cc4aa;box-shadow:inset 1px 1px rgba(255,255,255,0.45);"></div>
<div class="a t" style="left:176.00px;top:161.00px;font-size:9.1px;line-height:9.1px;color:#000;">6</div>
<div class="a t" style="left:250.26px;top:161.00px;font-size:9.1px;line-height:9.1px;color:#000;">2006</div>
<div class="a" style="left:174.5px;top:193.6px;width:784px;height:14.4px;background:#808080;"></div>
<div class="a" style="left:175.3px;top:196.8px;width:9.3px;height:9.3px;background:#d4d0c8;box-shadow:inset -1px -1px #909090, inset 1px 1px #f4f4f4;"></div>
<svg class="a" style="left:175.3px;top:196.8px" width="9.3" height="9.3"><path d="M1.9500000000000002 3.45 L7.3500000000000005 3.45 L4.65 6.45 Z" fill="#000" stroke="#000" stroke-width="0.5"/></svg>
<div class="a t" style="left:186.00px;top:197.00px;font-size:8.3px;line-height:8.3px;color:#fff;font-weight:bold;transform:scaleX(0.9460);transform-origin:0 0;">/PAYRUN/USA/2006Apr01 - Pay Checks</div>
<div class="a" style="left:948.2px;top:196.6px;width:9.7px;height:9.7px;background:#ececec;box-shadow:inset -1px -1px #a0a0a0;"></div>
<div class="a" style="left:949.7px;top:198.1px;width:6.499999999999999px;height:6.699999999999999px;border:1.2px solid #181818;border-top-width:1.6px;background:#d0d0d0;"></div>
<div class="a" style="left:174px;top:208.3px;width:138.5px;height:15.699999999999989px;background:#fdeeee;box-shadow:inset -2px -2px #404040, inset 1px 1px #fff;"></div>
<div class="a t" style="left:222.15px;top:212.00px;font-size:9px;line-height:9px;color:#000;transform:scaleX(0.8788);transform-origin:0 0;">Pay Checks</div>
<div class="a" style="left:313px;top:208.3px;width:127px;height:15.699999999999989px;background:#ececec;box-shadow:inset -2px -2px #404040, inset 1px 1px #fff;"></div>
<div class="a t" style="left:357.30px;top:212.00px;font-size:9px;line-height:9px;color:#000;transform:scaleX(0.8625);transform-origin:0 0;">Employees</div>
<div class="a" style="left:839px;top:208.3px;width:118.5px;height:15.699999999999989px;background:#ececec;box-shadow:inset -2px -2px #404040, inset 1px 1px #fff;"></div>
<div class="a t" style="left:887.25px;top:212.00px;font-size:9px;line-height:9px;color:#000;transform:scaleX(0.9357);transform-origin:0 0;">Notes</div>
<div class="a t" style="left:176.60px;top:227.00px;font-size:8.6px;line-height:8.6px;color:#fff;font-weight:bold;transform:scaleX(0.9901);transform-origin:0 0;">.paychecks.index/date</div>
<div class="a" style="left:948.2px;top:224.8px;width:9.7px;height:9.7px;background:#ececec;box-shadow:inset -1px -1px #a0a0a0;"></div>
<div class="a" style="left:949.7px;top:226.3px;width:6.499999999999999px;height:6.699999999999999px;border:1.2px solid #181818;border-top-width:1.6px;background:#d0d0d0;"></div>
<div class="a" style="left:175px;top:236px;width:783px;height:139px;background:#fff0f0;"></div>
<div class="a" style="left:175px;top:236px;width:43.5px;height:15px;background:#fdeeee;border-right:1.2px solid #d0c4c4;border-bottom:1.2px solid #d0c4c4;box-shadow:inset 1px 1px rgba(255,255,255,0.5);"></div>
<div class="a" style="left:218.5px;top:236px;width:64.5px;height:15px;background:#fdeeee;border-right:1.2px solid #d0c4c4;border-bottom:1.2px solid #d0c4c4;box-shadow:inset 1px 1px rgba(255,255,255,0.5);"></div>
<div class="a" style="left:283px;top:236px;width:77px;height:15px;background:#fdeeee;border-right:1.2px solid #d0c4c4;border-bottom:1.2px solid #d0c4c4;box-shadow:inset 1px 1px rgba(255,255,255,0.5);"></div>
<div class="a" style="left:360px;top:236px;width:80px;height:15px;background:#fdeeee;border-right:1.2px solid #d0c4c4;border-bottom:1.2px solid #d0c4c4;box-shadow:inset 1px 1px rgba(255,255,255,0.5);"></div>
<div class="a" style="left:440px;top:236px;width:80px;height:15px;background:#fdeeee;border-right:1.2px solid #d0c4c4;border-bottom:1.2px solid #d0c4c4;box-shadow:inset 1px 1px rgba(255,255,255,0.5);"></div>
<div class="a" style="left:520px;top:236px;width:80px;height:15px;background:#fdeeee;border-right:1.2px solid #d0c4c4;border-bottom:1.2px solid #d0c4c4;box-shadow:inset 1px 1px rgba(255,255,255,0.5);"></div>
<div class="a" style="left:600px;top:236px;width:80px;height:15px;background:#fdeeee;border-right:1.2px solid #d0c4c4;border-bottom:1.2px solid #d0c4c4;box-shadow:inset 1px 1px rgba(255,255,255,0.5);"></div>
<div class="a" style="left:680px;top:236px;width:80px;height:15px;background:#fdeeee;border-right:1.2px solid #d0c4c4;border-bottom:1.2px solid #d0c4c4;box-shadow:inset 1px 1px rgba(255,255,255,0.5);"></div>
<div class="a" style="left:760px;top:236px;width:80px;height:15px;background:#fdeeee;border-right:1.2px solid #d0c4c4;border-bottom:1.2px solid #d0c4c4;box-shadow:inset 1px 1px rgba(255,255,255,0.5);"></div>
<div class="a" style="left:840px;top:236px;width:52.5px;height:15px;background:#fdeeee;border-right:1.2px solid #d0c4c4;border-bottom:1.2px solid #d0c4c4;box-shadow:inset 1px 1px rgba(255,255,255,0.5);"></div>
<div class="a" style="left:892.5px;top:236px;width:65.5px;height:15px;background:#fdeeee;border-right:1.2px solid #d0c4c4;border-bottom:1.2px solid #d0c4c4;box-shadow:inset 1px 1px rgba(255,255,255,0.5);"></div>
<div class="a t" style="left:177.50px;top:239.00px;font-size:9.1px;line-height:9.1px;color:#000;">Line</div>
<div class="a t" style="left:222.50px;top:239.00px;font-size:9.1px;line-height:9.1px;color:#000;">Employee Id</div>
<div class="a t" style="left:285.70px;top:239.00px;font-size:9.1px;line-height:9.1px;color:#000;">Date</div>
<div class="a t" style="left:895.60px;top:239.00px;font-size:9.1px;line-height:9.1px;color:#000;">FUTA Earn</div>
<div class="a" style="left:175px;top:251.0px;width:43.5px;height:14.25px;background:#e2e200;border-right:1.2px solid #d0c4c4;border-bottom:1.2px solid #d0c4c4;box-shadow:inset 1px 1px rgba(255,255,255,0.5);"></div>
<div class="a" style="left:218.5px;top:251.0px;width:64.5px;height:14.25px;background:#ddd1d1;border-right:1.2px solid #d0c4c4;border-bottom:1.2px solid #d0c4c4;box-shadow:inset 1px 1px rgba(255,255,255,0.5);"></div>
<div class="a" style="left:283px;top:251.0px;width:77px;height:14.25px;background:#ddd1d1;border-right:1.2px solid #d0c4c4;border-bottom:1.2px solid #d0c4c4;box-shadow:inset 1px 1px rgba(255,255,255,0.5);"></div>
<div class="a" style="left:360px;top:251.0px;width:80px;height:14.25px;background:#ddd1d1;border-right:1.2px solid #d0c4c4;border-bottom:1.2px solid #d0c4c4;box-shadow:inset 1px 1px rgba(255,255,255,0.5);"></div>
<div class="a" style="left:440px;top:251.0px;width:80px;height:14.25px;background:#ddd1d1;border-right:1.2px solid #d0c4c4;border-bottom:1.2px solid #d0c4c4;box-shadow:inset 1px 1px rgba(255,255,255,0.5);"></div>
<div class="a" style="left:520px;top:251.0px;width:80px;height:14.25px;background:#ddd1d1;border-right:1.2px solid #d0c4c4;border-bottom:1.2px solid #d0c4c4;box-shadow:inset 1px 1px rgba(255,255,255,0.5);"></div>
<div class="a" style="left:600px;top:251.0px;width:80px;height:14.25px;background:#ddd1d1;border-right:1.2px solid #d0c4c4;border-bottom:1.2px solid #d0c4c4;box-shadow:inset 1px 1px rgba(255,255,255,0.5);"></div>
<div class="a" style="left:680px;top:251.0px;width:80px;height:14.25px;background:#ddd1d1;border-right:1.2px solid #d0c4c4;border-bottom:1.2px solid #d0c4c4;box-shadow:inset 1px 1px rgba(255,255,255,0.5);"></div>
<div class="a" style="left:760px;top:251.0px;width:80px;height:14.25px;background:#ddd1d1;border-right:1.2px solid #d0c4c4;border-bottom:1.2px solid #d0c4c4;box-shadow:inset 1px 1px rgba(255,255,255,0.5);"></div>
<div class="a" style="left:840px;top:251.0px;width:52.5px;height:14.25px;background:#ddd1d1;border-right:1.2px solid #d0c4c4;border-bottom:1.2px solid #d0c4c4;box-shadow:inset 1px 1px rgba(255,255,255,0.5);"></div>
<div class="a" style="left:892.5px;top:251.0px;width:65.5px;height:14.25px;background:#ddd1d1;border-right:1.2px solid #d0c4c4;border-bottom:1.2px solid #d0c4c4;box-shadow:inset 1px 1px rgba(255,255,255,0.5);"></div>
<div class="a t" style="left:176.50px;top:254.00px;font-size:9.1px;line-height:9.1px;color:#000;">1</div>
<div class="a t" style="left:220.50px;top:254.00px;font-size:9.1px;line-height:9.1px;color:#000;">EE</div>
<div class="a t" style="left:285.50px;top:254.00px;font-size:9.1px;line-height:9.1px;color:#000;">01Apr2006</div>
<div class="a t" style="left:944.35px;top:254.00px;font-size:9.1px;line-height:9.1px;color:#000;">0.0</div>
<div class="a t" style="left:874.85px;top:254.00px;font-size:9.1px;line-height:9.1px;color:#000;">.00</div>
<div class="a" style="left:175px;top:265.15px;width:43.5px;height:14.25px;background:#ffffff;border-right:1.2px solid #d0c4c4;border-bottom:1.2px solid #d0c4c4;box-shadow:inset 1px 1px rgba(255,255,255,0.5);"></div>
<div class="a" style="left:218.5px;top:265.15px;width:64.5px;height:14.25px;background:#ffffff;border-right:1.2px solid #d0c4c4;border-bottom:1.2px solid #d0c4c4;box-shadow:inset 1px 1px rgba(255,255,255,0.5);"></div>
<div class="a" style="left:283px;top:265.15px;width:77px;height:14.25px;background:#ffffff;border-right:1.2px solid #d0c4c4;border-bottom:1.2px solid #d0c4c4;box-shadow:inset 1px 1px rgba(255,255,255,0.5);"></div>
<div class="a" style="left:360px;top:265.15px;width:80px;height:14.25px;background:#ffffff;border-right:1.2px solid #d0c4c4;border-bottom:1.2px solid #d0c4c4;box-shadow:inset 1px 1px rgba(255,255,255,0.5);"></div>
<div class="a" style="left:440px;top:265.15px;width:80px;height:14.25px;background:#ffffff;border-right:1.2px solid #d0c4c4;border-bottom:1.2px solid #d0c4c4;box-shadow:inset 1px 1px rgba(255,255,255,0.5);"></div>
<div class="a" style="left:520px;top:265.15px;width:80px;height:14.25px;background:#ffffff;border-right:1.2px solid #d0c4c4;border-bottom:1.2px solid #d0c4c4;box-shadow:inset 1px 1px rgba(255,255,255,0.5);"></div>
<div class="a" style="left:600px;top:265.15px;width:80px;height:14.25px;background:#ffffff;border-right:1.2px solid #d0c4c4;border-bottom:1.2px solid #d0c4c4;box-shadow:inset 1px 1px rgba(255,255,255,0.5);"></div>
<div class="a" style="left:680px;top:265.15px;width:80px;height:14.25px;background:#ffffff;border-right:1.2px solid #d0c4c4;border-bottom:1.2px solid #d0c4c4;box-shadow:inset 1px 1px rgba(255,255,255,0.5);"></div>
<div class="a" style="left:760px;top:265.15px;width:80px;height:14.25px;background:#ffffff;border-right:1.2px solid #d0c4c4;border-bottom:1.2px solid #d0c4c4;box-shadow:inset 1px 1px rgba(255,255,255,0.5);"></div>
<div class="a" style="left:840px;top:265.15px;width:52.5px;height:14.25px;background:#ffffff;border-right:1.2px solid #d0c4c4;border-bottom:1.2px solid #d0c4c4;box-shadow:inset 1px 1px rgba(255,255,255,0.5);"></div>
<div class="a" style="left:892.5px;top:265.15px;width:65.5px;height:14.25px;background:#ffffff;border-right:1.2px solid #d0c4c4;border-bottom:1.2px solid #d0c4c4;box-shadow:inset 1px 1px rgba(255,255,255,0.5);"></div>
<div class="a t" style="left:176.50px;top:269.00px;font-size:9.1px;line-height:9.1px;color:#000;">2</div>
<div class="a t" style="left:220.50px;top:269.00px;font-size:9.1px;line-height:9.1px;color:#000;">FF</div>
<div class="a t" style="left:285.50px;top:269.00px;font-size:9.1px;line-height:9.1px;color:#000;">01Apr2006</div>
<div class="a t" style="left:934.23px;top:269.00px;font-size:9.1px;line-height:9.1px;color:#000;">272.0</div>
<div class="a t" style="left:874.85px;top:269.00px;font-size:9.1px;line-height:9.1px;color:#000;">.46</div>
<div class="a" style="left:175px;top:279.3px;width:43.5px;height:14.25px;background:#fdeeee;border-right:1.2px solid #d0c4c4;border-bottom:1.2px solid #d0c4c4;box-shadow:inset 1px 1px rgba(255,255,255,0.5);"></div>
<div class="a" style="left:218.5px;top:279.3px;width:64.5px;height:14.25px;background:#fdeeee;border-right:1.2px solid #d0c4c4;border-bottom:1.2px solid #d0c4c4;box-shadow:inset 1px 1px rgba(255,255,255,0.5);"></div>
<div class="a" style="left:283px;top:279.3px;width:77px;height:14.25px;background:#fdeeee;border-right:1.2px solid #d0c4c4;border-bottom:1.2px solid #d0c4c4;box-shadow:inset 1px 1px rgba(255,255,255,0.5);"></div>
<div class="a" style="left:360px;top:279.3px;width:80px;height:14.25px;background:#fdeeee;border-right:1.2px solid #d0c4c4;border-bottom:1.2px solid #d0c4c4;box-shadow:inset 1px 1px rgba(255,255,255,0.5);"></div>
<div class="a" style="left:440px;top:279.3px;width:80px;height:14.25px;background:#fdeeee;border-right:1.2px solid #d0c4c4;border-bottom:1.2px solid #d0c4c4;box-shadow:inset 1px 1px rgba(255,255,255,0.5);"></div>
<div class="a" style="left:520px;top:279.3px;width:80px;height:14.25px;background:#fdeeee;border-right:1.2px solid #d0c4c4;border-bottom:1.2px solid #d0c4c4;box-shadow:inset 1px 1px rgba(255,255,255,0.5);"></div>
<div class="a" style="left:600px;top:279.3px;width:80px;height:14.25px;background:#fdeeee;border-right:1.2px solid #d0c4c4;border-bottom:1.2px solid #d0c4c4;box-shadow:inset 1px 1px rgba(255,255,255,0.5);"></div>
<div class="a" style="left:680px;top:279.3px;width:80px;height:14.25px;background:#fdeeee;border-right:1.2px solid #d0c4c4;border-bottom:1.2px solid #d0c4c4;box-shadow:inset 1px 1px rgba(255,255,255,0.5);"></div>
<div class="a" style="left:760px;top:279.3px;width:80px;height:14.25px;background:#fdeeee;border-right:1.2px solid #d0c4c4;border-bottom:1.2px solid #d0c4c4;box-shadow:inset 1px 1px rgba(255,255,255,0.5);"></div>
<div class="a" style="left:840px;top:279.3px;width:52.5px;height:14.25px;background:#fdeeee;border-right:1.2px solid #d0c4c4;border-bottom:1.2px solid #d0c4c4;box-shadow:inset 1px 1px rgba(255,255,255,0.5);"></div>
<div class="a" style="left:892.5px;top:279.3px;width:65.5px;height:14.25px;background:#fdeeee;border-right:1.2px solid #d0c4c4;border-bottom:1.2px solid #d0c4c4;box-shadow:inset 1px 1px rgba(255,255,255,0.5);"></div>
<div class="a t" style="left:176.50px;top:283.00px;font-size:9.1px;line-height:9.1px;color:#000;">3</div>
<div class="a t" style="left:220.50px;top:283.00px;font-size:9.1px;line-height:9.1px;color:#000;">GG</div>
<div class="a t" style="left:285.50px;top:283.00px;font-size:9.1px;line-height:9.1px;color:#000;">01Apr2006</div>
<div class="a t" style="left:934.23px;top:283.00px;font-size:9.1px;line-height:9.1px;color:#000;">738.3</div>
<div class="a t" style="left:874.85px;top:283.00px;font-size:9.1px;line-height:9.1px;color:#000;">.00</div>
<div class="a" style="left:175px;top:293.45px;width:43.5px;height:14.25px;background:#ffffff;border-right:1.2px solid #d0c4c4;border-bottom:1.2px solid #d0c4c4;box-shadow:inset 1px 1px rgba(255,255,255,0.5);"></div>
<div class="a" style="left:218.5px;top:293.45px;width:64.5px;height:14.25px;background:#ffffff;border-right:1.2px solid #d0c4c4;border-bottom:1.2px solid #d0c4c4;box-shadow:inset 1px 1px rgba(255,255,255,0.5);"></div>
<div class="a" style="left:283px;top:293.45px;width:77px;height:14.25px;background:#ffffff;border-right:1.2px solid #d0c4c4;border-bottom:1.2px solid #d0c4c4;box-shadow:inset 1px 1px rgba(255,255,255,0.5);"></div>
<div class="a" style="left:360px;top:293.45px;width:80px;height:14.25px;background:#ffffff;border-right:1.2px solid #d0c4c4;border-bottom:1.2px solid #d0c4c4;box-shadow:inset 1px 1px rgba(255,255,255,0.5);"></div>
<div class="a" style="left:440px;top:293.45px;width:80px;height:14.25px;background:#ffffff;border-right:1.2px solid #d0c4c4;border-bottom:1.2px solid #d0c4c4;box-shadow:inset 1px 1px rgba(255,255,255,0.5);"></div>
<div class="a" style="left:520px;top:293.45px;width:80px;height:14.25px;background:#ffffff;border-right:1.2px solid #d0c4c4;border-bottom:1.2px solid #d0c4c4;box-shadow:inset 1px 1px rgba(255,255,255,0.5);"></div>
<div class="a" style="left:600px;top:293.45px;width:80px;height:14.25px;background:#ffffff;border-right:1.2px solid #d0c4c4;border-bottom:1.2px solid #d0c4c4;box-shadow:inset 1px 1px rgba(255,255,255,0.5);"></div>
<div class="a" style="left:680px;top:293.45px;width:80px;height:14.25px;background:#ffffff;border-right:1.2px solid #d0c4c4;border-bottom:1.2px solid #d0c4c4;box-shadow:inset 1px 1px rgba(255,255,255,0.5);"></div>
<div class="a" style="left:760px;top:293.45px;width:80px;height:14.25px;background:#ffffff;border-right:1.2px solid #d0c4c4;border-bottom:1.2px solid #d0c4c4;box-shadow:inset 1px 1px rgba(255,255,255,0.5);"></div>
<div class="a" style="left:840px;top:293.45px;width:52.5px;height:14.25px;background:#ffffff;border-right:1.2px solid #d0c4c4;border-bottom:1.2px solid #d0c4c4;box-shadow:inset 1px 1px rgba(255,255,255,0.5);"></div>
<div class="a" style="left:892.5px;top:293.45px;width:65.5px;height:14.25px;background:#ffffff;border-right:1.2px solid #d0c4c4;border-bottom:1.2px solid #d0c4c4;box-shadow:inset 1px 1px rgba(255,255,255,0.5);"></div>
<div class="a t" style="left:176.50px;top:297.00px;font-size:9.1px;line-height:9.1px;color:#000;">4</div>
<div class="a t" style="left:220.50px;top:297.00px;font-size:9.1px;line-height:9.1px;color:#000;">HH</div>
<div class="a t" style="left:285.50px;top:297.00px;font-size:9.1px;line-height:9.1px;color:#000;">01Apr2006</div>
<div class="a t" style="left:934.23px;top:297.00px;font-size:9.1px;line-height:9.1px;color:#000;">210.4</div>
<div class="a t" style="left:874.85px;top:297.00px;font-size:9.1px;line-height:9.1px;color:#000;">.60</div>
<div class="a" style="left:175px;top:307.6px;width:43.5px;height:14.25px;background:#fdeeee;border-right:1.2px solid #d0c4c4;box-shadow:inset 1px 1px rgba(255,255,255,0.5);"></div>
<div class="a" style="left:218.5px;top:307.6px;width:64.5px;height:14.25px;background:#fdeeee;border-right:1.2px solid #d0c4c4;box-shadow:inset 1px 1px rgba(255,255,255,0.5);"></div>
<div class="a" style="left:283px;top:307.6px;width:77px;height:14.25px;background:#fdeeee;border-right:1.2px solid #d0c4c4;box-shadow:inset 1px 1px rgba(255,255,255,0.5);"></div>
<div class="a" style="left:360px;top:307.6px;width:80px;height:14.25px;background:#fdeeee;border-right:1.2px solid #d0c4c4;box-shadow:inset 1px 1px rgba(255,255,255,0.5);"></div>
<div class="a" style="left:440px;top:307.6px;width:80px;height:14.25px;background:#fdeeee;border-right:1.2px solid #d0c4c4;box-shadow:inset 1px 1px rgba(255,255,255,0.5);"></div>
<div class="a" style="left:520px;top:307.6px;width:80px;height:14.25px;background:#fdeeee;border-right:1.2px solid #d0c4c4;box-shadow:inset 1px 1px rgba(255,255,255,0.5);"></div>
<div class="a" style="left:600px;top:307.6px;width:80px;height:14.25px;background:#fdeeee;border-right:1.2px solid #d0c4c4;box-shadow:inset 1px 1px rgba(255,255,255,0.5);"></div>
<div class="a" style="left:680px;top:307.6px;width:80px;height:14.25px;background:#fdeeee;border-right:1.2px solid #d0c4c4;box-shadow:inset 1px 1px rgba(255,255,255,0.5);"></div>
<div class="a" style="left:760px;top:307.6px;width:80px;height:14.25px;background:#fdeeee;border-right:1.2px solid #d0c4c4;box-shadow:inset 1px 1px rgba(255,255,255,0.5);"></div>
<div class="a" style="left:840px;top:307.6px;width:52.5px;height:14.25px;background:#fdeeee;border-right:1.2px solid #d0c4c4;box-shadow:inset 1px 1px rgba(255,255,255,0.5);"></div>
<div class="a" style="left:892.5px;top:307.6px;width:65.5px;height:14.25px;background:#fdeeee;border-right:1.2px solid #d0c4c4;box-shadow:inset 1px 1px rgba(255,255,255,0.5);"></div>
<div class="a t" style="left:176.50px;top:311.00px;font-size:9.1px;line-height:9.1px;color:#000;">5</div>
<div class="a t" style="left:220.50px;top:311.00px;font-size:9.1px;line-height:9.1px;color:#000;">JJ</div>
<div class="a t" style="left:285.50px;top:311.00px;font-size:9.1px;line-height:9.1px;color:#000;">01Apr2006</div>
<div class="a t" style="left:944.35px;top:311.00px;font-size:9.1px;line-height:9.1px;color:#000;">0.0</div>
<div class="a t" style="left:874.85px;top:311.00px;font-size:9.1px;line-height:9.1px;color:#000;">.48</div>
<div class="a" style="left:175px;top:375px;width:783px;height:11.3px;background:#d4d0c8;"></div>
<div class="a" style="left:700px;top:375px;width:247px;height:11.3px;background:repeating-conic-gradient(#d4d0c8 0 25%,#fff 0 50%) 0 0/2px 2px"></div>
<div class="a" style="left:175px;top:375px;width:783px;height:1.2px;background:#eeeeee;"></div>
<div class="a" style="left:175.3px;top:376px;width:10.7px;height:10.3px;background:#d4d0c8;box-shadow:inset -1px -1px #808080, inset 1px 1px #fff;"></div>
<svg class="a" style="left:175.3px;top:376px" width="11" height="11"><path d="M3.2 5.2 L6.4 2.2 L6.4 8.2 Z" fill="#000"/></svg>
<div class="a" style="left:186px;top:376px;width:1.3px;height:10.3px;background:#707070;"></div>
<div class="a" style="left:947.5px;top:376px;width:10.5px;height:10.3px;background:#d4d0c8;box-shadow:inset -1px -1px #808080, inset 1px 1px #fff;"></div>
<svg class="a" style="left:947.5px;top:376px" width="11" height="11"><path d="M7 5.2 L3.8 2.2 L3.8 8.2 Z" fill="#000"/></svg>
<div class="a" style="left:174.5px;top:386.3px;width:784px;height:14px;background:#808080;"></div>
<div class="a" style="left:175.3px;top:389px;width:9.2px;height:10px;background:#d4d0c8;box-shadow:inset -1px -1px #909090, inset 1px 1px #f4f4f4;"></div>
<svg class="a" style="left:175.3px;top:389px" width="9.2" height="10"><path d="M1.8999999999999995 3.8 L7.3 3.8 L4.6 6.8 Z" fill="#000" stroke="#000" stroke-width="0.5"/></svg>
<div class="a t" style="left:186.50px;top:391.00px;font-size:8.3px;line-height:8.3px;color:#fff;font-weight:bold;transform:scaleX(0.9750);transform-origin:0 0;">/TRANSACTION/PAYROLL/PAYCHECKS</div>
<div class="a" style="left:947.8px;top:389.5px;width:9.7px;height:9.7px;background:#ececec;box-shadow:inset -1px -1px #a0a0a0;"></div>
<div class="a" style="left:949.3px;top:391.0px;width:6.499999999999999px;height:6.699999999999999px;border:1.2px solid #181818;border-top-width:1.6px;background:#d0d0d0;"></div>
<div class="a" style="left:174.5px;top:400.5px;width:174.5px;height:16.5px;background:#fdeeee;box-shadow:inset -2px -2px #404040, inset 1px 1px #fff;"></div>
<div class="a t" style="left:229.95px;top:404.00px;font-size:9px;line-height:9px;color:#000;transform:scaleX(0.8649);transform-origin:0 0;">Pay Check Details</div>
<div class="a" style="left:824.5px;top:400.5px;width:133.0px;height:16.5px;background:#ececec;box-shadow:inset -2px -2px #404040, inset 1px 1px #fff;"></div>
<div class="a t" style="left:880.00px;top:404.00px;font-size:9px;line-height:9px;color:#000;transform:scaleX(0.9357);transform-origin:0 0;">Notes</div>
<div class="a t" style="left:176.30px;top:419.00px;font-size:8.3px;line-height:8.3px;color:#fff;font-weight:bold;">USA Payroll Transactions.index/date</div>
<div class="a" style="left:948px;top:417.5px;width:9.7px;height:9.7px;background:#ececec;box-shadow:inset -1px -1px #a0a0a0;"></div>
<div class="a" style="left:949.5px;top:419.0px;width:6.499999999999999px;height:6.699999999999999px;border:1.2px solid #181818;border-top-width:1.6px;background:#d0d0d0;"></div>
<div class="a" style="left:317px;top:83.5px;width:506px;height:337.5px;background:#808080;"></div>
<div class="a" style="left:319px;top:96px;width:502px;height:325px;background:#e8e1c6;"></div>
<div class="a t" style="left:319.50px;top:87.00px;font-size:8.5px;line-height:8.5px;color:#fff;font-weight:bold;transform:scaleX(0.9942);transform-origin:0 0;">Pay Withholdings Settings</div>
<div class="a" style="left:811.5px;top:85.5px;width:10px;height:10px;background:#d4d0c8;box-shadow:inset -1px -1px #404040, inset 1px 1px #fff;"></div>
<svg class="a" style="left:811.5px;top:85.5px" width="10" height="10"><path d="M2.4 2.4L7.6 7.6M7.6 2.4L2.4 7.6" stroke="#000" stroke-width="1.2"/></svg>
<div class="a" style="left:319px;top:96.5px;width:502px;height:1px;background:#f4f0e0;"></div>
<div class="a" style="left:319px;top:97.5px;width:502px;height:20.5px;background:#1a1a1a;"></div>
<div class="a" style="left:319px;top:97.5px;width:247.8px;height:19px;background:#cdc6a9;"></div>
<div class="a" style="left:569px;top:97.5px;width:252px;height:19px;background:#cdc6a9;"></div>
<div class="a" style="left:568.2px;top:97.5px;width:1.2px;height:19px;background:#f0ecd8;"></div>
<div class="a t" style="left:417.70px;top:104.00px;font-size:9.3px;line-height:9.3px;color:#000;transform:scaleX(1.0873);transform-origin:0 0;">Dismiss F4</div>
<div class="a t" style="left:669.05px;top:104.00px;font-size:9.3px;line-height:9.3px;color:#000;transform:scaleX(1.0362);transform-origin:0 0;">Continue F5</div>
<div class="a" style="left:319px;top:118px;width:502px;height:20px;background:#e8e1c6;"></div>
<div class="a t" style="left:321.40px;top:124.00px;font-size:9.6px;line-height:9.6px;color:#000;">Current Settings</div>
<div class="a" style="left:396.4px;top:119px;width:14.5px;height:17px;background:#dcd6c2;box-shadow:inset -1.3px -1.3px #303030;"></div>
<svg class="a" style="left:396.4px;top:119px" width="15" height="17"><path d="M2.9 8 L11.8 8 L7.35 12.6 Z" fill="#000"/></svg>
<div class="a" style="left:411px;top:118px;width:340.5px;height:19.8px;background:#fff;"></div>
<div class="a" style="left:410.7px;top:118px;width:1.5px;height:19.8px;background:#202020;"></div>
<div class="a t" style="left:413.50px;top:125.00px;font-size:9.3px;line-height:9.3px;color:#000;transform:scaleX(0.9700);transform-origin:0 0;">*** Default Settings ***</div>
<div class="a" style="left:751.5px;top:118px;width:30.5px;height:20px;background:#d4d0c8;box-shadow:inset -1.5px -1.5px #404040, inset 1px 1px #fff;"></div>
<div class="a" style="left:782px;top:118px;width:39.5px;height:20px;background:#d4d0c8;box-shadow:inset -1.5px -1.5px #404040, inset 1px 1px #fff;"></div>
<div class="a t" style="left:757.00px;top:125.00px;font-size:9.3px;line-height:9.3px;color:#000;transform:scaleX(1.0212);transform-origin:0 0;">New</div>
<div class="a t" style="left:788.20px;top:125.00px;font-size:9.3px;line-height:9.3px;color:#000;">Delete</div>
<div class="a" style="left:319px;top:137.6px;width:502px;height:284px;background:#ece5cb;"></div>
<div class="a" style="left:816.5px;top:137.6px;width:4.5px;height:284px;background:#e3dcc1;"></div>
<div class="a" style="left:319px;top:137.6px;width:42.5px;height:15.4px;background:#ece5cb;border-right:1.3px solid #cdc5a6;border-bottom:1.2px solid #cdc5a6;box-shadow:inset 1px 1px rgba(255,255,255,0.5);"></div>
<div class="a" style="left:361.5px;top:137.6px;width:191.0px;height:15.4px;background:#ece5cb;border-right:1.3px solid #cdc5a6;border-bottom:1.2px solid #cdc5a6;box-shadow:inset 1px 1px rgba(255,255,255,0.5);"></div>
<div class="a" style="left:552.5px;top:137.6px;width:264.0px;height:15.4px;background:#ece5cb;border-right:1.3px solid #cdc5a6;border-bottom:1.2px solid #cdc5a6;box-shadow:inset 1px 1px rgba(255,255,255,0.5);"></div>
<div class="a t" style="left:321.90px;top:141.00px;font-size:9.1px;line-height:9.1px;color:#000;">Line</div>
<div class="a t" style="left:365.00px;top:141.00px;font-size:9.1px;line-height:9.1px;color:#000;">Setting</div>
<div class="a t" style="left:555.40px;top:141.00px;font-size:9.1px;line-height:9.1px;color:#000;">Value</div>
<div class="a" style="left:319px;top:153.0px;width:42.5px;height:14.25px;background:#efe8d0;border-right:1.3px solid #cdc5a6;border-bottom:1.2px solid #cdc5a6;box-shadow:inset 1px 1px rgba(255,255,255,0.5);"></div>
<div class="a" style="left:361.5px;top:153.0px;width:191.0px;height:14.25px;background:#efe8d0;border-right:1.3px solid #cdc5a6;border-bottom:1.2px solid #cdc5a6;box-shadow:inset 1px 1px rgba(255,255,255,0.5);"></div>
<div class="a" style="left:552.5px;top:153.0px;width:264.0px;height:14.25px;background:#efe8d0;border-right:1.3px solid #cdc5a6;border-bottom:1.2px solid #cdc5a6;box-shadow:inset 1px 1px rgba(255,255,255,0.5);"></div>
<div class="a t" style="left:320.00px;top:157.00px;font-size:9.1px;line-height:9.1px;color:#000;">1</div>
<div class="a t" style="left:363.50px;top:157.00px;font-size:9.1px;line-height:9.1px;color:#000;">Check Date</div>
<div class="a t" style="left:554.50px;top:157.00px;font-size:9.1px;line-height:9.1px;color:#000;">15May2006</div>
<div class="a" style="left:319px;top:167.25px;width:42.5px;height:14.25px;background:#efe8d0;border-right:1.3px solid #cdc5a6;border-bottom:1.2px solid #cdc5a6;box-shadow:inset 1px 1px rgba(255,255,255,0.5);"></div>
<div class="a" style="left:361.5px;top:167.25px;width:191.0px;height:14.25px;background:#efe8d0;border-right:1.3px solid #cdc5a6;border-bottom:1.2px solid #cdc5a6;box-shadow:inset 1px 1px rgba(255,255,255,0.5);"></div>
<div class="a" style="left:552.5px;top:167.25px;width:264.0px;height:14.25px;background:#efe8d0;border-right:1.3px solid #cdc5a6;border-bottom:1.2px solid #cdc5a6;box-shadow:inset 1px 1px rgba(255,255,255,0.5);"></div>
<div class="a t" style="left:320.00px;top:171.00px;font-size:9.1px;line-height:9.1px;color:#000;">2</div>
<div class="a t" style="left:363.50px;top:171.00px;font-size:9.1px;line-height:9.1px;color:#000;">Check Number</div>
<div class="a t" style="left:554.50px;top:171.00px;font-size:9.1px;line-height:9.1px;color:#000;">9555</div>
<div class="a" style="left:319px;top:181.5px;width:42.5px;height:14.25px;background:#efe8d0;border-right:1.3px solid #cdc5a6;border-bottom:1.2px solid #cdc5a6;box-shadow:inset 1px 1px rgba(255,255,255,0.5);"></div>
<div class="a" style="left:361.5px;top:181.5px;width:191.0px;height:14.25px;background:#efe8d0;border-right:1.3px solid #cdc5a6;border-bottom:1.2px solid #cdc5a6;box-shadow:inset 1px 1px rgba(255,255,255,0.5);"></div>
<div class="a" style="left:552.5px;top:181.5px;width:264.0px;height:14.25px;background:#efe8d0;border-right:1.3px solid #cdc5a6;border-bottom:1.2px solid #cdc5a6;box-shadow:inset 1px 1px rgba(255,255,255,0.5);"></div>
<div class="a t" style="left:320.00px;top:185.00px;font-size:9.1px;line-height:9.1px;color:#000;">3</div>
<div class="a t" style="left:363.50px;top:185.00px;font-size:9.1px;line-height:9.1px;color:#000;">Withholdings Start Date</div>
<div class="a t" style="left:554.50px;top:185.00px;font-size:9.1px;line-height:9.1px;color:#000;">01Jan2006</div>
<div class="a" style="left:319px;top:195.75px;width:42.5px;height:14.25px;background:#efe8d0;border-right:1.3px solid #cdc5a6;border-bottom:1.2px solid #cdc5a6;box-shadow:inset 1px 1px rgba(255,255,255,0.5);"></div>
<div class="a" style="left:361.5px;top:195.75px;width:191.0px;height:14.25px;background:#efe8d0;border-right:1.3px solid #cdc5a6;border-bottom:1.2px solid #cdc5a6;box-shadow:inset 1px 1px rgba(255,255,255,0.5);"></div>
<div class="a" style="left:552.5px;top:195.75px;width:264.0px;height:14.25px;background:#efe8d0;border-right:1.3px solid #cdc5a6;border-bottom:1.2px solid #cdc5a6;box-shadow:inset 1px 1px rgba(255,255,255,0.5);"></div>
<div class="a t" style="left:320.00px;top:200.00px;font-size:9.1px;line-height:9.1px;color:#000;">4</div>
<div class="a t" style="left:363.50px;top:200.00px;font-size:9.1px;line-height:9.1px;color:#000;">Withholdings End Date</div>
<div class="a t" style="left:554.50px;top:200.00px;font-size:9.1px;line-height:9.1px;color:#000;">30Apr2006</div>
<div class="a" style="left:319px;top:210.0px;width:42.5px;height:14.25px;background:#efe8d0;border-right:1.3px solid #cdc5a6;border-bottom:1.2px solid #cdc5a6;box-shadow:inset 1px 1px rgba(255,255,255,0.5);"></div>
<div class="a" style="left:361.5px;top:210.0px;width:191.0px;height:14.25px;background:#efe8d0;border-right:1.3px solid #cdc5a6;border-bottom:1.2px solid #cdc5a6;box-shadow:inset 1px 1px rgba(255,255,255,0.5);"></div>
<div class="a" style="left:552.5px;top:210.0px;width:264.0px;height:14.25px;background:#efe8d0;border-right:1.3px solid #cdc5a6;border-bottom:1.2px solid #cdc5a6;box-shadow:inset 1px 1px rgba(255,255,255,0.5);"></div>
<div class="a t" style="left:320.00px;top:214.00px;font-size:9.1px;line-height:9.1px;color:#000;">5</div>
<div class="a t" style="left:363.50px;top:214.00px;font-size:9.1px;line-height:9.1px;color:#000;"></div>
<div class="a t" style="left:554.50px;top:214.00px;font-size:9.1px;line-height:9.1px;color:#000;"></div>
<div class="a" style="left:319px;top:224.25px;width:42.5px;height:14.25px;background:#efe8d0;border-right:1.3px solid #cdc5a6;border-bottom:1.2px solid #cdc5a6;box-shadow:inset 1px 1px rgba(255,255,255,0.5);"></div>
<div class="a" style="left:361.5px;top:224.25px;width:191.0px;height:14.25px;background:#efe8d0;border-right:1.3px solid #cdc5a6;border-bottom:1.2px solid #cdc5a6;box-shadow:inset 1px 1px rgba(255,255,255,0.5);"></div>
<div class="a" style="left:552.5px;top:224.25px;width:264.0px;height:14.25px;background:#efe8d0;border-right:1.3px solid #cdc5a6;border-bottom:1.2px solid #cdc5a6;box-shadow:inset 1px 1px rgba(255,255,255,0.5);"></div>
<div class="a t" style="left:320.00px;top:228.00px;font-size:9.1px;line-height:9.1px;color:#000;">6</div>
<div class="a t" style="left:363.50px;top:228.00px;font-size:9.1px;line-height:9.1px;color:#000;"></div>
<div class="a t" style="left:554.50px;top:228.00px;font-size:9.1px;line-height:9.1px;color:#000;"></div>
<div class="a" style="left:319px;top:366.75px;width:42.5px;height:14.25px;background:#efe8d0;border-right:1.3px solid #cdc5a6;border-bottom:1.2px solid #cdc5a6;box-shadow:inset 1px 1px rgba(255,255,255,0.5);"></div>
<div class="a" style="left:361.5px;top:366.75px;width:191.0px;height:14.25px;background:#efe8d0;border-right:1.3px solid #cdc5a6;border-bottom:1.2px solid #cdc5a6;box-shadow:inset 1px 1px rgba(255,255,255,0.5);"></div>
<div class="a" style="left:552.5px;top:366.75px;width:264.0px;height:14.25px;background:#efe8d0;border-right:1.3px solid #cdc5a6;border-bottom:1.2px solid #cdc5a6;box-shadow:inset 1px 1px rgba(255,255,255,0.5);"></div>
<div class="a" style="left:319px;top:381.0px;width:42.5px;height:14.25px;background:#d6ceb2;border-right:1.3px solid #cdc5a6;border-bottom:1.2px solid #cdc5a6;box-shadow:inset 1px 1px rgba(255,255,255,0.5);"></div>
<div class="a" style="left:361.5px;top:381.0px;width:191.0px;height:14.25px;background:#d6ceb2;border-right:1.3px solid #cdc5a6;border-bottom:1.2px solid #cdc5a6;box-shadow:inset 1px 1px rgba(255,255,255,0.5);"></div>
<div class="a" style="left:552.5px;top:381.0px;width:264.0px;height:14.25px;background:#e2e000;border-right:1.3px solid #cdc5a6;border-bottom:1.2px solid #cdc5a6;box-shadow:inset 1px 1px rgba(255,255,255,0.5);"></div>
<div class="a t" style="left:320.00px;top:385.00px;font-size:9.1px;line-height:9.1px;color:#000;">17</div>
<div class="a t" style="left:363.50px;top:385.00px;font-size:9.1px;line-height:9.1px;color:#000;">Employee Tax Remitted Account</div>
<div class="a t" style="left:554.50px;top:385.00px;font-size:9.1px;line-height:9.1px;color:#000;">FIT-REM</div>
<div class="a" style="left:301.7px;top:210.5px;width:573.0px;height:167.5px;background:#000;"></div>
<div class="a" style="left:303.5px;top:212.2px;width:569.5px;height:11.5px;background:#00008c;"></div>
<div class="a t" style="left:303.80px;top:214.00px;font-size:8.6px;line-height:8.6px;color:#fff;font-weight:bold;">Confirm Remittance</div>
<div class="a" style="left:863.3px;top:213.3px;width:10.5px;height:9.5px;background:#d4d0c8;box-shadow:inset -1px -1px #404040, inset 1px 1px #fff;"></div>
<svg class="a" style="left:863.3px;top:213.3px" width="11" height="10"><path d="M2.6 2.3L7.9 7.4M7.9 2.3L2.6 7.4" stroke="#000" stroke-width="1.2"/></svg>
<div class="a" style="left:303.5px;top:223.7px;width:569.5px;height:1.3px;background:#b8e8e0;"></div>
<div class="a" style="left:303.5px;top:225px;width:268px;height:19.4px;background:#8fbb9e;"></div>
<div class="a" style="left:573.5px;top:225px;width:298.8px;height:19.4px;background:#8fbb9e;"></div>
<div class="a" style="left:573px;top:225px;width:1px;height:19.4px;background:#e0f0e4;"></div>
<div class="a t" style="left:413.30px;top:231.00px;font-size:9.4px;line-height:9.4px;color:#000;font-weight:bold;transform:scaleX(0.9872);transform-origin:0 0;">Dismiss F4</div>
<div class="a t" style="left:683.65px;top:231.00px;font-size:9.4px;line-height:9.4px;color:#000;font-weight:bold;transform:scaleX(1.0390);transform-origin:0 0;">Post Payment F5</div>
<div class="a" style="left:303.5px;top:246px;width:569.5px;height:130.8px;background:#c8f4d6;"></div>
<div class="a" style="left:303.5px;top:246px;width:42.80000000000001px;height:27.5px;background:#c8f0d6;border-right:1.5px solid #9cc2a8;border-bottom:1.3px solid #9cc2a8;box-shadow:inset 1px 1px #e4fcec;"></div>
<div class="a" style="left:346.3px;top:246px;width:159.5px;height:27.5px;background:#c8f0d6;border-right:1.5px solid #9cc2a8;border-bottom:1.3px solid #9cc2a8;box-shadow:inset 1px 1px #e4fcec;"></div>
<div class="a" style="left:505.8px;top:246px;width:90.99999999999994px;height:27.5px;background:#c8f0d6;border-right:1.5px solid #9cc2a8;border-bottom:1.3px solid #9cc2a8;box-shadow:inset 1px 1px #e4fcec;"></div>
<div class="a" style="left:596.8px;top:246px;width:91.0px;height:27.5px;background:#c8f0d6;border-right:1.5px solid #9cc2a8;border-bottom:1.3px solid #9cc2a8;box-shadow:inset 1px 1px #e4fcec;"></div>
<div class="a" style="left:687.8px;top:246px;width:91.0px;height:27.5px;background:#c8f0d6;border-right:1.5px solid #9cc2a8;border-bottom:1.3px solid #9cc2a8;box-shadow:inset 1px 1px #e4fcec;"></div>
<div class="a" style="left:778.8px;top:246px;width:90.20000000000005px;height:27.5px;background:#c8f0d6;border-right:1.5px solid #9cc2a8;border-bottom:1.3px solid #9cc2a8;box-shadow:inset 1px 1px #e4fcec;"></div>
<div class="a t" style="left:306.30px;top:260.00px;font-size:9.1px;line-height:9.1px;color:#000;">Line</div>
<div class="a t" style="left:349.80px;top:260.00px;font-size:9.1px;line-height:9.1px;color:#000;">Description</div>
<div class="a t" style="left:508.50px;top:249.00px;font-size:9.1px;line-height:9.1px;color:#000;">Perpetual</div>
<div class="a t" style="left:508.50px;top:260.00px;font-size:9.1px;line-height:9.1px;color:#000;">Balance</div>
<div class="a t" style="left:599.30px;top:249.00px;font-size:9.1px;line-height:9.1px;color:#000;">Withheld/Accrued</div>
<div class="a t" style="left:599.30px;top:260.00px;font-size:9.1px;line-height:9.1px;color:#000;">In Period</div>
<div class="a t" style="left:690.00px;top:249.00px;font-size:9.1px;line-height:9.1px;color:#000;">Remittance</div>
<div class="a t" style="left:690.00px;top:260.00px;font-size:9.1px;line-height:9.1px;color:#000;">Amount</div>
<div class="a t" style="left:781.00px;top:249.00px;font-size:9.1px;line-height:9.1px;color:#000;">Final</div>
<div class="a t" style="left:781.00px;top:260.00px;font-size:9.1px;line-height:9.1px;color:#000;">Balance</div>
<div class="a" style="left:303.5px;top:273.5px;width:42.80000000000001px;height:14.3px;background:#abcfb7;border-right:1.5px solid #9cc2a8;border-bottom:1.3px solid #9cc2a8;box-shadow:inset 1px 1px #e4fcec;"></div>
<div class="a" style="left:346.3px;top:273.5px;width:159.5px;height:14.3px;background:#abcfb7;border-right:1.5px solid #9cc2a8;border-bottom:1.3px solid #9cc2a8;box-shadow:inset 1px 1px #e4fcec;"></div>
<div class="a" style="left:505.8px;top:273.5px;width:90.99999999999994px;height:14.3px;background:#abcfb7;border-right:1.5px solid #9cc2a8;border-bottom:1.3px solid #9cc2a8;box-shadow:inset 1px 1px #e4fcec;"></div>
<div class="a" style="left:596.8px;top:273.5px;width:91.0px;height:14.3px;background:#abcfb7;border-right:1.5px solid #9cc2a8;border-bottom:1.3px solid #9cc2a8;box-shadow:inset 1px 1px #e4fcec;"></div>
<div class="a" style="left:687.8px;top:273.5px;width:91.0px;height:14.3px;background:#f2f200;border-right:1.5px solid #9cc2a8;border-bottom:1.3px solid #9cc2a8;box-shadow:inset 1px 1px #e4fcec;"></div>
<div class="a" style="left:778.8px;top:273.5px;width:90.20000000000005px;height:14.3px;background:#abcfb7;border-right:1.5px solid #9cc2a8;border-bottom:1.3px solid #9cc2a8;box-shadow:inset 1px 1px #e4fcec;"></div>
<div class="a t" style="left:304.50px;top:277.00px;font-size:9.1px;line-height:9.1px;color:#000;">1</div>
<div class="a t" style="left:347.50px;top:277.00px;font-size:9.1px;line-height:9.1px;color:#000;">Employee S.S. Remitted</div>
<div class="a t" style="left:555.08px;top:277.00px;font-size:9.1px;line-height:9.1px;color:#000;">2,661.59</div>
<div class="a t" style="left:645.58px;top:277.00px;font-size:9.1px;line-height:9.1px;color:#000;">2,661.59</div>
<div class="a t" style="left:732.88px;top:277.00px;font-size:9.1px;line-height:9.1px;color:#000;">2,661.59</div>
<div class="a t" style="left:845.79px;top:277.00px;font-size:9.1px;line-height:9.1px;color:#000;">0.00</div>
<div class="a" style="left:687.6px;top:273.0px;width:90px;height:14.6px;border:1px solid #b8b800;"></div>
<div class="a" style="left:303.5px;top:287.7px;width:42.80000000000001px;height:14.3px;background:#cdf3d9;border-right:1.5px solid #9cc2a8;border-bottom:1.3px solid #9cc2a8;box-shadow:inset 1px 1px #e4fcec;"></div>
<div class="a" style="left:346.3px;top:287.7px;width:159.5px;height:14.3px;background:#cdf3d9;border-right:1.5px solid #9cc2a8;border-bottom:1.3px solid #9cc2a8;box-shadow:inset 1px 1px #e4fcec;"></div>
<div class="a" style="left:505.8px;top:287.7px;width:90.99999999999994px;height:14.3px;background:#cdf3d9;border-right:1.5px solid #9cc2a8;border-bottom:1.3px solid #9cc2a8;box-shadow:inset 1px 1px #e4fcec;"></div>
<div class="a" style="left:596.8px;top:287.7px;width:91.0px;height:14.3px;background:#cdf3d9;border-right:1.5px solid #9cc2a8;border-bottom:1.3px solid #9cc2a8;box-shadow:inset 1px 1px #e4fcec;"></div>
<div class="a" style="left:687.8px;top:287.7px;width:91.0px;height:14.3px;background:#cdf3d9;border-right:1.5px solid #9cc2a8;border-bottom:1.3px solid #9cc2a8;box-shadow:inset 1px 1px #e4fcec;"></div>
<div class="a" style="left:778.8px;top:287.7px;width:90.20000000000005px;height:14.3px;background:#cdf3d9;border-right:1.5px solid #9cc2a8;border-bottom:1.3px solid #9cc2a8;box-shadow:inset 1px 1px #e4fcec;"></div>
<div class="a t" style="left:304.50px;top:291.00px;font-size:9.1px;line-height:9.1px;color:#000;">2</div>
<div class="a t" style="left:347.50px;top:291.00px;font-size:9.1px;line-height:9.1px;color:#000;">Employer S.S. Remitted</div>
<div class="a t" style="left:555.08px;top:291.00px;font-size:9.1px;line-height:9.1px;color:#000;">2,661.59</div>
<div class="a t" style="left:645.58px;top:291.00px;font-size:9.1px;line-height:9.1px;color:#000;">2,661.59</div>
<div class="a t" style="left:736.88px;top:291.00px;font-size:9.1px;line-height:9.1px;color:#000;">2,661.59</div>
<div class="a t" style="left:845.79px;top:291.00px;font-size:9.1px;line-height:9.1px;color:#000;">0.00</div>
<div class="a" style="left:303.5px;top:301.9px;width:42.80000000000001px;height:14.3px;background:#cdf3d9;border-right:1.5px solid #9cc2a8;border-bottom:1.3px solid #9cc2a8;box-shadow:inset 1px 1px #e4fcec;"></div>
<div class="a" style="left:346.3px;top:301.9px;width:159.5px;height:14.3px;background:#cdf3d9;border-right:1.5px solid #9cc2a8;border-bottom:1.3px solid #9cc2a8;box-shadow:inset 1px 1px #e4fcec;"></div>
<div class="a" style="left:505.8px;top:301.9px;width:90.99999999999994px;height:14.3px;background:#cdf3d9;border-right:1.5px solid #9cc2a8;border-bottom:1.3px solid #9cc2a8;box-shadow:inset 1px 1px #e4fcec;"></div>
<div class="a" style="left:596.8px;top:301.9px;width:91.0px;height:14.3px;background:#cdf3d9;border-right:1.5px solid #9cc2a8;border-bottom:1.3px solid #9cc2a8;box-shadow:inset 1px 1px #e4fcec;"></div>
<div class="a" style="left:687.8px;top:301.9px;width:91.0px;height:14.3px;background:#cdf3d9;border-right:1.5px solid #9cc2a8;border-bottom:1.3px solid #9cc2a8;box-shadow:inset 1px 1px #e4fcec;"></div>
<div class="a" style="left:778.8px;top:301.9px;width:90.20000000000005px;height:14.3px;background:#cdf3d9;border-right:1.5px solid #9cc2a8;border-bottom:1.3px solid #9cc2a8;box-shadow:inset 1px 1px #e4fcec;"></div>
<div class="a t" style="left:304.50px;top:305.00px;font-size:9.1px;line-height:9.1px;color:#000;">3</div>
<div class="a t" style="left:347.50px;top:305.00px;font-size:9.1px;line-height:9.1px;color:#000;">Employee Medicare Remitted</div>
<div class="a t" style="left:562.67px;top:305.00px;font-size:9.1px;line-height:9.1px;color:#000;">622.46</div>
<div class="a t" style="left:653.17px;top:305.00px;font-size:9.1px;line-height:9.1px;color:#000;">622.46</div>
<div class="a t" style="left:744.47px;top:305.00px;font-size:9.1px;line-height:9.1px;color:#000;">622.46</div>
<div class="a t" style="left:845.79px;top:305.00px;font-size:9.1px;line-height:9.1px;color:#000;">0.00</div>
<div class="a" style="left:303.5px;top:316.1px;width:42.80000000000001px;height:14.3px;background:#cdf3d9;border-right:1.5px solid #9cc2a8;border-bottom:1.3px solid #9cc2a8;box-shadow:inset 1px 1px #e4fcec;"></div>
<div class="a" style="left:346.3px;top:316.1px;width:159.5px;height:14.3px;background:#cdf3d9;border-right:1.5px solid #9cc2a8;border-bottom:1.3px solid #9cc2a8;box-shadow:inset 1px 1px #e4fcec;"></div>
<div class="a" style="left:505.8px;top:316.1px;width:90.99999999999994px;height:14.3px;background:#cdf3d9;border-right:1.5px solid #9cc2a8;border-bottom:1.3px solid #9cc2a8;box-shadow:inset 1px 1px #e4fcec;"></div>
<div class="a" style="left:596.8px;top:316.1px;width:91.0px;height:14.3px;background:#cdf3d9;border-right:1.5px solid #9cc2a8;border-bottom:1.3px solid #9cc2a8;box-shadow:inset 1px 1px #e4fcec;"></div>
<div class="a" style="left:687.8px;top:316.1px;width:91.0px;height:14.3px;background:#cdf3d9;border-right:1.5px solid #9cc2a8;border-bottom:1.3px solid #9cc2a8;box-shadow:inset 1px 1px #e4fcec;"></div>
<div class="a" style="left:778.8px;top:316.1px;width:90.20000000000005px;height:14.3px;background:#cdf3d9;border-right:1.5px solid #9cc2a8;border-bottom:1.3px solid #9cc2a8;box-shadow:inset 1px 1px #e4fcec;"></div>
<div class="a t" style="left:304.50px;top:319.00px;font-size:9.1px;line-height:9.1px;color:#000;">4</div>
<div class="a t" style="left:347.50px;top:319.00px;font-size:9.1px;line-height:9.1px;color:#000;">Employer Medicare Remitted</div>
<div class="a t" style="left:562.67px;top:319.00px;font-size:9.1px;line-height:9.1px;color:#000;">622.46</div>
<div class="a t" style="left:653.17px;top:319.00px;font-size:9.1px;line-height:9.1px;color:#000;">622.46</div>
<div class="a t" style="left:744.47px;top:319.00px;font-size:9.1px;line-height:9.1px;color:#000;">622.46</div>
<div class="a t" style="left:845.79px;top:319.00px;font-size:9.1px;line-height:9.1px;color:#000;">0.00</div>
<div class="a" style="left:303.5px;top:330.3px;width:42.80000000000001px;height:14.3px;background:#cdf3d9;border-right:1.5px solid #9cc2a8;border-bottom:1.3px solid #9cc2a8;box-shadow:inset 1px 1px #e4fcec;"></div>
<div class="a" style="left:346.3px;top:330.3px;width:159.5px;height:14.3px;background:#cdf3d9;border-right:1.5px solid #9cc2a8;border-bottom:1.3px solid #9cc2a8;box-shadow:inset 1px 1px #e4fcec;"></div>
<div class="a" style="left:505.8px;top:330.3px;width:90.99999999999994px;height:14.3px;background:#cdf3d9;border-right:1.5px solid #9cc2a8;border-bottom:1.3px solid #9cc2a8;box-shadow:inset 1px 1px #e4fcec;"></div>
<div class="a" style="left:596.8px;top:330.3px;width:91.0px;height:14.3px;background:#cdf3d9;border-right:1.5px solid #9cc2a8;border-bottom:1.3px solid #9cc2a8;box-shadow:inset 1px 1px #e4fcec;"></div>
<div class="a" style="left:687.8px;top:330.3px;width:91.0px;height:14.3px;background:#cdf3d9;border-right:1.5px solid #9cc2a8;border-bottom:1.3px solid #9cc2a8;box-shadow:inset 1px 1px #e4fcec;"></div>
<div class="a" style="left:778.8px;top:330.3px;width:90.20000000000005px;height:14.3px;background:#cdf3d9;border-right:1.5px solid #9cc2a8;border-bottom:1.3px solid #9cc2a8;box-shadow:inset 1px 1px #e4fcec;"></div>
<div class="a t" style="left:304.50px;top:333.00px;font-size:9.1px;line-height:9.1px;color:#000;">5</div>
<div class="a t" style="left:347.50px;top:333.00px;font-size:9.1px;line-height:9.1px;color:#000;">Federal Income Tax Remitted</div>
<div class="a t" style="left:555.08px;top:333.00px;font-size:9.1px;line-height:9.1px;color:#000;">5,905.76</div>
<div class="a t" style="left:645.58px;top:333.00px;font-size:9.1px;line-height:9.1px;color:#000;">5,905.76</div>
<div class="a t" style="left:736.88px;top:333.00px;font-size:9.1px;line-height:9.1px;color:#000;">5,905.76</div>
<div class="a t" style="left:845.79px;top:333.00px;font-size:9.1px;line-height:9.1px;color:#000;">0.00</div>
<div class="a" style="left:303.5px;top:344.5px;width:42.80000000000001px;height:14.3px;background:#cdf3d9;border-right:1.5px solid #9cc2a8;border-bottom:1.3px solid #9cc2a8;box-shadow:inset 1px 1px #e4fcec;"></div>
<div class="a" style="left:346.3px;top:344.5px;width:159.5px;height:14.3px;background:#cdf3d9;border-right:1.5px solid #9cc2a8;border-bottom:1.3px solid #9cc2a8;box-shadow:inset 1px 1px #e4fcec;"></div>
<div class="a" style="left:505.8px;top:344.5px;width:90.99999999999994px;height:14.3px;background:#cdf3d9;border-right:1.5px solid #9cc2a8;border-bottom:1.3px solid #9cc2a8;box-shadow:inset 1px 1px #e4fcec;"></div>
<div class="a" style="left:596.8px;top:344.5px;width:91.0px;height:14.3px;background:#cdf3d9;border-right:1.5px solid #9cc2a8;border-bottom:1.3px solid #9cc2a8;box-shadow:inset 1px 1px #e4fcec;"></div>
<div class="a" style="left:687.8px;top:344.5px;width:91.0px;height:14.3px;background:#cdf3d9;border-right:1.5px solid #9cc2a8;border-bottom:1.3px solid #9cc2a8;box-shadow:inset 1px 1px #e4fcec;"></div>
<div class="a" style="left:778.8px;top:344.5px;width:90.20000000000005px;height:14.3px;background:#cdf3d9;border-right:1.5px solid #9cc2a8;border-bottom:1.3px solid #9cc2a8;box-shadow:inset 1px 1px #e4fcec;"></div>
<div class="a t" style="left:304.50px;top:348.00px;font-size:9.1px;line-height:9.1px;color:#000;">6</div>
<div class="a t" style="left:347.50px;top:348.00px;font-size:9.1px;line-height:9.1px;color:#000;">Total Remittance</div>
<div class="a t" style="left:550.02px;top:348.00px;font-size:9.1px;line-height:9.1px;color:#000;">12,473.86</div>
<div class="a t" style="left:640.52px;top:348.00px;font-size:9.1px;line-height:9.1px;color:#000;">12,473.86</div>
<div class="a t" style="left:731.82px;top:348.00px;font-size:9.1px;line-height:9.1px;color:#000;">12,473.86</div>
<div class="a t" style="left:845.79px;top:348.00px;font-size:9.1px;line-height:9.1px;color:#000;">0.00</div></body></html>
